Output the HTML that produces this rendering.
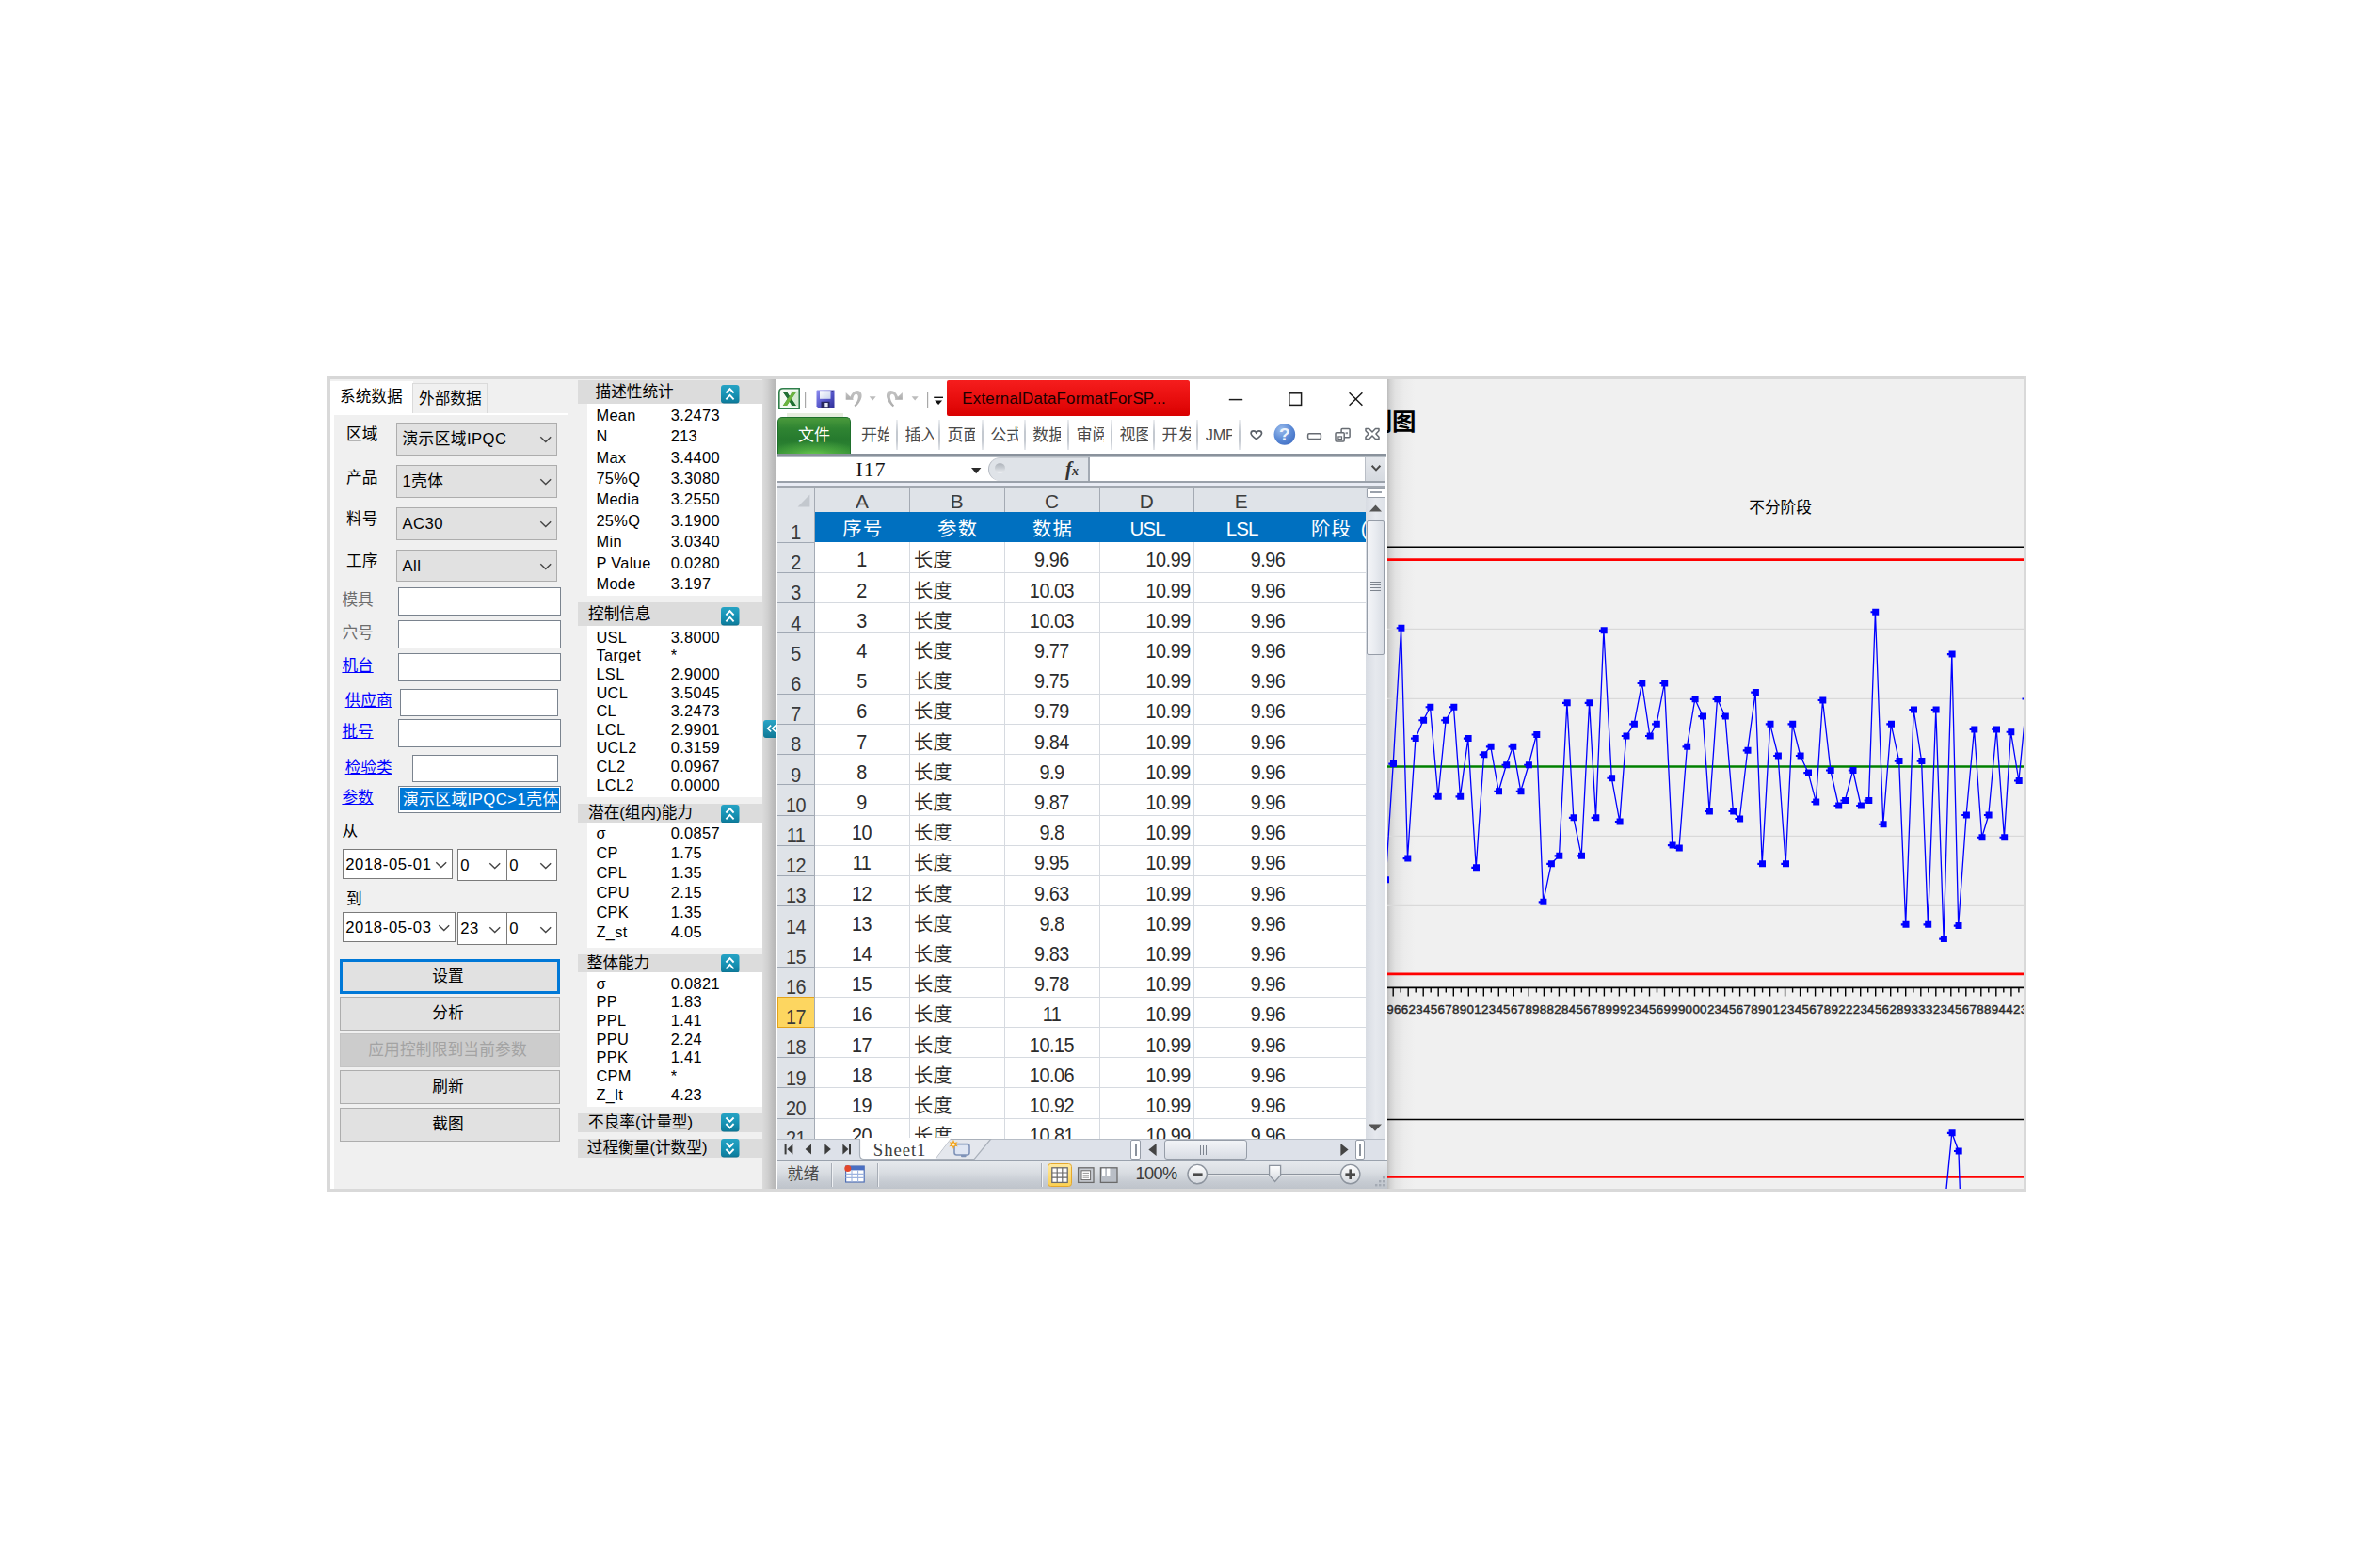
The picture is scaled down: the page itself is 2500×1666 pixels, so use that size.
<!DOCTYPE html><html lang="zh"><head><meta charset="utf-8"><title>SPC</title><style>
html,body{margin:0;padding:0;background:#fff;}
body{width:2500px;height:1666px;position:relative;overflow:hidden;font-family:"Liberation Sans","Noto Sans CJK SC",sans-serif;}
div{position:absolute;box-sizing:border-box;}
svg{position:absolute;overflow:visible;}
.cb{background:#e1e1e1;border:1px solid #adadad;}
.inp{background:#fff;border:1.5px solid #7a838e;}
.wcb{background:#fff;border:1.5px solid #7a7a7a;}
.btn{background:#e1e1e1;border:1.5px solid #adadad;text-align:center;font-size:16.67px;}
.hd{background:#dcdcdc;}
.wb{background:#fff;}
.st{font-size:16.4px;letter-spacing:0.35px;white-space:nowrap;color:#000;}
.lnk{color:#0000ff;text-decoration:underline;}
.xl{font-family:"Liberation Sans","Noto Sans CJK SC",sans-serif;color:#2b2b2b;}
.mono{font-family:"Liberation Mono","Noto Serif CJK SC",monospace;}
.ser{font-family:"Liberation Serif","Noto Serif CJK SC",serif;}
</style></head><body>
<div style="left:347px;top:400px;width:1806px;height:866px;background:#f0f0f0;"></div>
<div style="left:347px;top:400px;width:1806px;height:3px;background:#d7d7d7;"></div>
<div style="left:347px;top:400px;width:4px;height:866px;background:#d9d9d9;"></div>
<div style="left:347px;top:1263px;width:1806px;height:3px;background:#d9d9d9;"></div>
<div style="left:2150px;top:400px;width:3px;height:866px;background:#d9d9d9;"></div>
<div style="left:351px;top:405px;width:88px;height:36px;background:#fff;"></div>
<div style="left:438px;top:407px;width:80px;height:32px;background:#f0f0f0;border:1px solid #dadada;border-bottom:none;"></div>
<div style="left:351px;top:439px;width:253px;height:824px;background:#f0f0f0;border-right:1px solid #dcdcdc;"></div>
<div style="left:351px;top:439px;width:252px;height:2px;background:#fff;"></div>
<div style="left:351px;top:439px;width:4px;height:824px;background:#fff;"></div>
<div style="left:361px;top:408.70px;height:25px;line-height:25px;font-size:16.67px;color:#000;white-space:nowrap;">系统数据</div>
<div style="left:445px;top:411.10px;height:25px;line-height:25px;font-size:16.67px;color:#000;white-space:nowrap;">外部数据</div>
<div class="cb" style="left:421px;top:449px;width:171px;height:35px;"></div>
<div style="left:427.5px;top:454.40px;height:25px;line-height:25px;font-size:16.67px;color:#000;white-space:nowrap;letter-spacing:0.45px;">演示区域IPQC</div>
<svg style="left:573.6px;top:464.3px" width="11.5" height="6" viewBox="0 0 11.5 6"><path d="M0.3 0.3 L5.75 5.5 L11.2 0.3" fill="none" stroke="#444" stroke-width="1.4"/></svg>
<div style="left:368px;top:449.40px;height:25px;line-height:25px;font-size:16.67px;color:#000;white-space:nowrap;">区域</div>
<div class="cb" style="left:421px;top:494px;width:171px;height:35px;"></div>
<div style="left:427.5px;top:499.40px;height:25px;line-height:25px;font-size:16.67px;color:#000;white-space:nowrap;letter-spacing:0.45px;">1壳体</div>
<svg style="left:573.6px;top:509.3px" width="11.5" height="6" viewBox="0 0 11.5 6"><path d="M0.3 0.3 L5.75 5.5 L11.2 0.3" fill="none" stroke="#444" stroke-width="1.4"/></svg>
<div style="left:368px;top:494.70px;height:25px;line-height:25px;font-size:16.67px;color:#000;white-space:nowrap;">产品</div>
<div class="cb" style="left:421px;top:539px;width:171px;height:35px;"></div>
<div style="left:427.5px;top:544.40px;height:25px;line-height:25px;font-size:16.67px;color:#000;white-space:nowrap;letter-spacing:0.45px;">AC30</div>
<svg style="left:573.6px;top:554.3px" width="11.5" height="6" viewBox="0 0 11.5 6"><path d="M0.3 0.3 L5.75 5.5 L11.2 0.3" fill="none" stroke="#444" stroke-width="1.4"/></svg>
<div style="left:368px;top:539.40px;height:25px;line-height:25px;font-size:16.67px;color:#000;white-space:nowrap;">料号</div>
<div class="cb" style="left:421px;top:584px;width:171px;height:34px;"></div>
<div style="left:427.5px;top:588.90px;height:25px;line-height:25px;font-size:16.67px;color:#000;white-space:nowrap;letter-spacing:0.45px;">All</div>
<svg style="left:573.6px;top:598.8px" width="11.5" height="6" viewBox="0 0 11.5 6"><path d="M0.3 0.3 L5.75 5.5 L11.2 0.3" fill="none" stroke="#444" stroke-width="1.4"/></svg>
<div style="left:368px;top:584.10px;height:25px;line-height:25px;font-size:16.67px;color:#000;white-space:nowrap;">工序</div>
<div class="inp" style="left:423px;top:624px;width:173px;height:30px;"></div>
<div style="left:363.4px;top:624.70px;height:25px;line-height:25px;font-size:16.67px;color:#6d6d6d;white-space:nowrap;">模具</div>
<div class="inp" style="left:423px;top:659px;width:173px;height:30px;"></div>
<div style="left:363.4px;top:659.60px;height:25px;line-height:25px;font-size:16.67px;color:#6d6d6d;white-space:nowrap;">穴号</div>
<div class="inp" style="left:423px;top:694px;width:173px;height:30px;"></div>
<div style="left:363.4px;top:695.10px;height:25px;line-height:25px;font-size:16.67px;color:#0000ff;white-space:nowrap;text-decoration:underline;">机台</div>
<div class="inp" style="left:425px;top:732px;width:168px;height:29px;"></div>
<div style="left:366.7px;top:732.10px;height:25px;line-height:25px;font-size:16.67px;color:#0000ff;white-space:nowrap;text-decoration:underline;">供应商</div>
<div class="inp" style="left:423px;top:764px;width:173px;height:30px;"></div>
<div style="left:363.4px;top:765.40px;height:25px;line-height:25px;font-size:16.67px;color:#0000ff;white-space:nowrap;text-decoration:underline;">批号</div>
<div class="inp" style="left:438px;top:802px;width:155px;height:29px;"></div>
<div style="left:366.7px;top:803.00px;height:25px;line-height:25px;font-size:16.67px;color:#0000ff;white-space:nowrap;text-decoration:underline;">检验类</div>
<div class="inp" style="left:423px;top:835px;width:173px;height:29px;"></div>
<div style="left:363.4px;top:835.40px;height:25px;line-height:25px;font-size:16.67px;color:#0000ff;white-space:nowrap;text-decoration:underline;">参数</div>
<div style="left:425px;top:837px;width:169px;height:24px;background:#0078d7;overflow:hidden;"></div>
<div style="left:425px;top:837px;width:169px;height:24px;overflow:hidden;"><div style="left:3px;top:0;height:24px;line-height:25px;font-size:16.67px;color:#fff;white-space:nowrap;letter-spacing:0.5px;">演示区域IPQC&gt;1壳体</div></div>
<div style="left:363.5px;top:870.50px;height:25px;line-height:25px;font-size:16.67px;color:#000;white-space:nowrap;">从</div>
<div style="left:368px;top:942.70px;height:25px;line-height:25px;font-size:16.67px;color:#000;white-space:nowrap;">到</div>
<div class="wcb" style="left:364px;top:902px;width:117px;height:32px;"></div>
<div style="left:367.2px;top:905.70px;height:25px;line-height:25px;font-size:16.67px;color:#000;white-space:nowrap;letter-spacing:0.62px;">2018-05-01</div>
<svg style="left:463px;top:916.0px" width="11.5" height="6" viewBox="0 0 11.5 6"><path d="M0.3 0.3 L5.75 5.5 L11.2 0.3" fill="none" stroke="#444" stroke-width="1.4"/></svg>
<div class="wcb" style="left:486px;top:902px;width:53px;height:34px;"></div>
<div style="left:489.2px;top:906.70px;height:25px;line-height:25px;font-size:16.67px;color:#000;white-space:nowrap;letter-spacing:0.62px;">0</div>
<svg style="left:520px;top:917.0px" width="11.5" height="6" viewBox="0 0 11.5 6"><path d="M0.3 0.3 L5.75 5.5 L11.2 0.3" fill="none" stroke="#444" stroke-width="1.4"/></svg>
<div class="wcb" style="left:538px;top:902px;width:54px;height:34px;"></div>
<div style="left:541.2px;top:906.70px;height:25px;line-height:25px;font-size:16.67px;color:#000;white-space:nowrap;letter-spacing:0.62px;">0</div>
<svg style="left:573.6px;top:917.0px" width="11.5" height="6" viewBox="0 0 11.5 6"><path d="M0.3 0.3 L5.75 5.5 L11.2 0.3" fill="none" stroke="#444" stroke-width="1.4"/></svg>
<div class="wcb" style="left:364px;top:969px;width:120px;height:32px;"></div>
<div style="left:367.2px;top:972.70px;height:25px;line-height:25px;font-size:16.67px;color:#000;white-space:nowrap;letter-spacing:0.62px;">2018-05-03</div>
<svg style="left:466px;top:983.0px" width="11.5" height="6" viewBox="0 0 11.5 6"><path d="M0.3 0.3 L5.75 5.5 L11.2 0.3" fill="none" stroke="#444" stroke-width="1.4"/></svg>
<div class="wcb" style="left:486px;top:969px;width:53px;height:35px;"></div>
<div style="left:489.2px;top:974.20px;height:25px;line-height:25px;font-size:16.67px;color:#000;white-space:nowrap;letter-spacing:0.62px;">23</div>
<svg style="left:520px;top:984.5px" width="11.5" height="6" viewBox="0 0 11.5 6"><path d="M0.3 0.3 L5.75 5.5 L11.2 0.3" fill="none" stroke="#444" stroke-width="1.4"/></svg>
<div class="wcb" style="left:538px;top:969px;width:54px;height:35px;"></div>
<div style="left:541.2px;top:974.20px;height:25px;line-height:25px;font-size:16.67px;color:#000;white-space:nowrap;letter-spacing:0.62px;">0</div>
<svg style="left:573.6px;top:984.5px" width="11.5" height="6" viewBox="0 0 11.5 6"><path d="M0.3 0.3 L5.75 5.5 L11.2 0.3" fill="none" stroke="#444" stroke-width="1.4"/></svg>
<div class="btn" style="left:361px;top:1019px;width:234px;height:37px;border:3px solid #0078d7;line-height:31px;padding-right:4px;">设置</div>
<div class="btn" style="left:361px;top:1059px;width:234px;height:36px;line-height:33px;padding-right:4px;">分析</div>
<div class="btn" style="left:361px;top:1098px;width:234px;height:36px;line-height:33px;background:#cccccc;border-color:#c4c4c4;color:#a3a3a3;padding-right:5px;letter-spacing:0.2px;">应用控制限到当前参数</div>
<div class="btn" style="left:361px;top:1137px;width:234px;height:36px;line-height:33px;padding-right:4px;">刷新</div>
<div class="btn" style="left:361px;top:1177px;width:234px;height:36px;line-height:33px;padding-right:4px;">截图</div>
<div class="hd" style="left:614px;top:404px;width:196px;height:25px;overflow:hidden;"></div>
<div style="left:632.5px;top:403.80px;height:25px;line-height:25px;font-size:16.67px;color:#000;white-space:nowrap;">描述性统计</div>
<svg style="left:765.8px;top:408.5px" width="19.5" height="19" viewBox="0 0 19.5 19"><defs><linearGradient id="tg765.8408.5" x1="0" y1="0" x2="0" y2="1"><stop offset="0" stop-color="#27a3c4"/><stop offset="0.5" stop-color="#1793b5"/><stop offset="0.9" stop-color="#0f7f9f"/><stop offset="1" stop-color="#0b6f8d"/></linearGradient></defs><rect x="0" y="0" width="19.5" height="19.5" rx="3" fill="url(#tg765.8408.5)"/><path d="M5.4 8.5 L9.5 4.1 L13.6 8.5 M5.4 15.3 L9.5 10.9 L13.6 15.3" fill="none" stroke="#fff" stroke-width="1.9" stroke-linejoin="miter"/></svg>
<div class="wb" style="left:624px;top:429px;width:186px;height:204px;overflow:hidden;"></div>
<div class="st" style="left:633.4px;top:430.70px;height:22.00px;line-height:20px;overflow:hidden;">Mean</div>
<div class="st" style="left:712.7px;top:430.70px;height:22.00px;line-height:20px;overflow:hidden;">3.2473</div>
<div class="st" style="left:633.4px;top:453.10px;height:22.00px;line-height:20px;overflow:hidden;">N</div>
<div class="st" style="left:712.7px;top:453.10px;height:22.00px;line-height:20px;overflow:hidden;">213</div>
<div class="st" style="left:633.4px;top:475.50px;height:22.00px;line-height:20px;overflow:hidden;">Max</div>
<div class="st" style="left:712.7px;top:475.50px;height:22.00px;line-height:20px;overflow:hidden;">3.4400</div>
<div class="st" style="left:633.4px;top:497.90px;height:22.00px;line-height:20px;overflow:hidden;">75%Q</div>
<div class="st" style="left:712.7px;top:497.90px;height:22.00px;line-height:20px;overflow:hidden;">3.3080</div>
<div class="st" style="left:633.4px;top:520.30px;height:22.00px;line-height:20px;overflow:hidden;">Media</div>
<div class="st" style="left:712.7px;top:520.30px;height:22.00px;line-height:20px;overflow:hidden;">3.2550</div>
<div class="st" style="left:633.4px;top:542.70px;height:22.00px;line-height:20px;overflow:hidden;">25%Q</div>
<div class="st" style="left:712.7px;top:542.70px;height:22.00px;line-height:20px;overflow:hidden;">3.1900</div>
<div class="st" style="left:633.4px;top:565.10px;height:22.00px;line-height:20px;overflow:hidden;">Min</div>
<div class="st" style="left:712.7px;top:565.10px;height:22.00px;line-height:20px;overflow:hidden;">3.0340</div>
<div class="st" style="left:633.4px;top:587.50px;height:22.00px;line-height:20px;overflow:hidden;">P Value</div>
<div class="st" style="left:712.7px;top:587.50px;height:22.00px;line-height:20px;overflow:hidden;">0.0280</div>
<div class="st" style="left:633.4px;top:609.90px;height:22.00px;line-height:20px;overflow:hidden;">Mode</div>
<div class="st" style="left:712.7px;top:609.90px;height:22.00px;line-height:20px;overflow:hidden;">3.197</div>
<div class="hd" style="left:614px;top:640px;width:196px;height:25px;overflow:hidden;"></div>
<div style="left:625px;top:639.80px;height:25px;line-height:25px;font-size:16.67px;color:#000;white-space:nowrap;">控制信息</div>
<svg style="left:765.8px;top:644.5px" width="19.5" height="19" viewBox="0 0 19.5 19"><defs><linearGradient id="tg765.8644.5" x1="0" y1="0" x2="0" y2="1"><stop offset="0" stop-color="#27a3c4"/><stop offset="0.5" stop-color="#1793b5"/><stop offset="0.9" stop-color="#0f7f9f"/><stop offset="1" stop-color="#0b6f8d"/></linearGradient></defs><rect x="0" y="0" width="19.5" height="19.5" rx="3" fill="url(#tg765.8644.5)"/><path d="M5.4 8.5 L9.5 4.1 L13.6 8.5 M5.4 15.3 L9.5 10.9 L13.6 15.3" fill="none" stroke="#fff" stroke-width="1.9" stroke-linejoin="miter"/></svg>
<div class="wb" style="left:624px;top:665px;width:186px;height:182px;overflow:hidden;"></div>
<div class="st" style="left:633.4px;top:666.70px;height:18.03px;line-height:20px;overflow:hidden;">USL</div>
<div class="st" style="left:712.7px;top:666.70px;height:18.03px;line-height:20px;overflow:hidden;">3.8000</div>
<div class="st" style="left:633.4px;top:686.33px;height:18.03px;line-height:20px;overflow:hidden;">Target</div>
<div class="st" style="left:712.7px;top:686.33px;height:18.03px;line-height:20px;overflow:hidden;">*</div>
<div class="st" style="left:633.4px;top:705.96px;height:18.03px;line-height:20px;overflow:hidden;">LSL</div>
<div class="st" style="left:712.7px;top:705.96px;height:18.03px;line-height:20px;overflow:hidden;">2.9000</div>
<div class="st" style="left:633.4px;top:725.59px;height:18.03px;line-height:20px;overflow:hidden;">UCL</div>
<div class="st" style="left:712.7px;top:725.59px;height:18.03px;line-height:20px;overflow:hidden;">3.5045</div>
<div class="st" style="left:633.4px;top:745.22px;height:18.03px;line-height:20px;overflow:hidden;">CL</div>
<div class="st" style="left:712.7px;top:745.22px;height:18.03px;line-height:20px;overflow:hidden;">3.2473</div>
<div class="st" style="left:633.4px;top:764.85px;height:18.03px;line-height:20px;overflow:hidden;">LCL</div>
<div class="st" style="left:712.7px;top:764.85px;height:18.03px;line-height:20px;overflow:hidden;">2.9901</div>
<div class="st" style="left:633.4px;top:784.48px;height:18.03px;line-height:20px;overflow:hidden;">UCL2</div>
<div class="st" style="left:712.7px;top:784.48px;height:18.03px;line-height:20px;overflow:hidden;">0.3159</div>
<div class="st" style="left:633.4px;top:804.11px;height:18.03px;line-height:20px;overflow:hidden;">CL2</div>
<div class="st" style="left:712.7px;top:804.11px;height:18.03px;line-height:20px;overflow:hidden;">0.0967</div>
<div class="st" style="left:633.4px;top:823.74px;height:22.00px;line-height:20px;overflow:hidden;">LCL2</div>
<div class="st" style="left:712.7px;top:823.74px;height:22.00px;line-height:20px;overflow:hidden;">0.0000</div>
<div class="hd" style="left:614px;top:854px;width:196px;height:20px;overflow:hidden;"></div>
<div style="left:625px;top:851.30px;height:25px;line-height:25px;font-size:16.67px;color:#000;white-space:nowrap;">潜在(组内)能力</div>
<svg style="left:765.8px;top:855.4px" width="19.5" height="18.5" viewBox="0 0 19.5 18.5"><defs><linearGradient id="tg765.8855.4" x1="0" y1="0" x2="0" y2="1"><stop offset="0" stop-color="#27a3c4"/><stop offset="0.5" stop-color="#1793b5"/><stop offset="0.9" stop-color="#0f7f9f"/><stop offset="1" stop-color="#0b6f8d"/></linearGradient></defs><rect x="0" y="0" width="19.5" height="19.5" rx="3" fill="url(#tg765.8855.4)"/><path d="M5.4 8.5 L9.5 4.1 L13.6 8.5 M5.4 15.3 L9.5 10.9 L13.6 15.3" fill="none" stroke="#fff" stroke-width="1.9" stroke-linejoin="miter"/></svg>
<div class="wb" style="left:624px;top:874px;width:186px;height:133px;overflow:hidden;"></div>
<div class="st" style="left:633.4px;top:875.00px;height:21.05px;line-height:20px;overflow:hidden;">σ</div>
<div class="st" style="left:712.7px;top:875.00px;height:21.05px;line-height:20px;overflow:hidden;">0.0857</div>
<div class="st" style="left:633.4px;top:896.05px;height:21.05px;line-height:20px;overflow:hidden;">CP</div>
<div class="st" style="left:712.7px;top:896.05px;height:21.05px;line-height:20px;overflow:hidden;">1.75</div>
<div class="st" style="left:633.4px;top:917.10px;height:21.05px;line-height:20px;overflow:hidden;">CPL</div>
<div class="st" style="left:712.7px;top:917.10px;height:21.05px;line-height:20px;overflow:hidden;">1.35</div>
<div class="st" style="left:633.4px;top:938.15px;height:21.05px;line-height:20px;overflow:hidden;">CPU</div>
<div class="st" style="left:712.7px;top:938.15px;height:21.05px;line-height:20px;overflow:hidden;">2.15</div>
<div class="st" style="left:633.4px;top:959.20px;height:21.05px;line-height:20px;overflow:hidden;">CPK</div>
<div class="st" style="left:712.7px;top:959.20px;height:21.05px;line-height:20px;overflow:hidden;">1.35</div>
<div class="st" style="left:633.4px;top:980.25px;height:22.00px;line-height:20px;overflow:hidden;">Z_st</div>
<div class="st" style="left:712.7px;top:980.25px;height:22.00px;line-height:20px;overflow:hidden;">4.05</div>
<div class="hd" style="left:614px;top:1014px;width:196px;height:19px;overflow:hidden;"></div>
<div style="left:623.8px;top:1010.80px;height:25px;line-height:25px;font-size:16.67px;color:#000;white-space:nowrap;">整体能力</div>
<svg style="left:765.8px;top:1014.2px" width="19.5" height="19" viewBox="0 0 19.5 19"><defs><linearGradient id="tg765.81014.2" x1="0" y1="0" x2="0" y2="1"><stop offset="0" stop-color="#27a3c4"/><stop offset="0.5" stop-color="#1793b5"/><stop offset="0.9" stop-color="#0f7f9f"/><stop offset="1" stop-color="#0b6f8d"/></linearGradient></defs><rect x="0" y="0" width="19.5" height="19.5" rx="3" fill="url(#tg765.81014.2)"/><path d="M5.4 8.5 L9.5 4.1 L13.6 8.5 M5.4 15.3 L9.5 10.9 L13.6 15.3" fill="none" stroke="#fff" stroke-width="1.9" stroke-linejoin="miter"/></svg>
<div class="wb" style="left:624px;top:1033px;width:186px;height:143px;overflow:hidden;"></div>
<div class="st" style="left:633.4px;top:1034.80px;height:18.05px;line-height:20px;overflow:hidden;">σ</div>
<div class="st" style="left:712.7px;top:1034.80px;height:18.05px;line-height:20px;overflow:hidden;">0.0821</div>
<div class="st" style="left:633.4px;top:1054.45px;height:18.05px;line-height:20px;overflow:hidden;">PP</div>
<div class="st" style="left:712.7px;top:1054.45px;height:18.05px;line-height:20px;overflow:hidden;">1.83</div>
<div class="st" style="left:633.4px;top:1074.10px;height:18.05px;line-height:20px;overflow:hidden;">PPL</div>
<div class="st" style="left:712.7px;top:1074.10px;height:18.05px;line-height:20px;overflow:hidden;">1.41</div>
<div class="st" style="left:633.4px;top:1093.75px;height:18.05px;line-height:20px;overflow:hidden;">PPU</div>
<div class="st" style="left:712.7px;top:1093.75px;height:18.05px;line-height:20px;overflow:hidden;">2.24</div>
<div class="st" style="left:633.4px;top:1113.40px;height:18.05px;line-height:20px;overflow:hidden;">PPK</div>
<div class="st" style="left:712.7px;top:1113.40px;height:18.05px;line-height:20px;overflow:hidden;">1.41</div>
<div class="st" style="left:633.4px;top:1133.05px;height:18.05px;line-height:20px;overflow:hidden;">CPM</div>
<div class="st" style="left:712.7px;top:1133.05px;height:18.05px;line-height:20px;overflow:hidden;">*</div>
<div class="st" style="left:633.4px;top:1152.70px;height:22.00px;line-height:20px;overflow:hidden;">Z_lt</div>
<div class="st" style="left:712.7px;top:1152.70px;height:22.00px;line-height:20px;overflow:hidden;">4.23</div>
<div class="hd" style="left:614px;top:1183px;width:196px;height:20px;overflow:hidden;"></div>
<div style="left:625px;top:1180.30px;height:25px;line-height:25px;font-size:16.67px;color:#000;white-space:nowrap;">不良率(计量型)</div>
<svg style="left:765.8px;top:1183.1px" width="19.5" height="19.6" viewBox="0 0 19.5 19.6"><defs><linearGradient id="tg765.81183.1" x1="0" y1="0" x2="0" y2="1"><stop offset="0" stop-color="#27a3c4"/><stop offset="0.5" stop-color="#1793b5"/><stop offset="0.9" stop-color="#0f7f9f"/><stop offset="1" stop-color="#0b6f8d"/></linearGradient></defs><rect x="0" y="0" width="19.5" height="19.5" rx="3" fill="url(#tg765.81183.1)"/><path d="M5.4 4.5 L9.5 8.7 L13.6 4.5 M5.4 11 L9.5 15.3 L13.6 11" fill="none" stroke="#fff" stroke-width="1.9" stroke-linejoin="miter"/></svg>
<div class="hd" style="left:614px;top:1210px;width:196px;height:20px;overflow:hidden;"></div>
<div style="left:623.8px;top:1207.30px;height:25px;line-height:25px;font-size:16.67px;color:#000;white-space:nowrap;">过程衡量(计数型)</div>
<svg style="left:765.8px;top:1209.9px" width="19.5" height="19.6" viewBox="0 0 19.5 19.6"><defs><linearGradient id="tg765.81209.9" x1="0" y1="0" x2="0" y2="1"><stop offset="0" stop-color="#27a3c4"/><stop offset="0.5" stop-color="#1793b5"/><stop offset="0.9" stop-color="#0f7f9f"/><stop offset="1" stop-color="#0b6f8d"/></linearGradient></defs><rect x="0" y="0" width="19.5" height="19.5" rx="3" fill="url(#tg765.81209.9)"/><path d="M5.4 4.5 L9.5 8.7 L13.6 4.5 M5.4 11 L9.5 15.3 L13.6 11" fill="none" stroke="#fff" stroke-width="1.9" stroke-linejoin="miter"/></svg>
<div style="left:810px;top:403px;width:14px;height:860px;background:linear-gradient(90deg,#dbdbdb 0%,#d0d0d0 40%,#c0c0c0 75%,#b6b6b6 100%);"></div>
<svg style="left:810.5px;top:765px" width="14" height="19" viewBox="0 0 14 19"><defs><linearGradient id="tgs" x1="0" y1="0" x2="0" y2="1"><stop offset="0" stop-color="#2aa5c6"/><stop offset="1" stop-color="#0f7896"/></linearGradient></defs><path d="M3 0 H14 V19 H3 Q0 19 0 16 V3 Q0 0 3 0Z" fill="url(#tgs)"/><path d="M8.2 5.6 L4.6 9 L8.2 12.4 M13.2 5.6 L9.6 9 L13.2 12.4" fill="none" stroke="#fff" stroke-width="1.6"/></svg>
<div style="left:824px;top:403px;width:650px;height:860px;background:#fff;"></div>
<svg style="left:827px;top:412px" width="23" height="23" viewBox="0 0 23 23">
<path d="M5 0.8 H22.2 V22.2 H0.8 V5 Q0.8 0.8 5 0.8Z" fill="#f4faf3" stroke="#2f7f4a" stroke-width="1.6"/>
<path d="M13 3.5 L21 3.5 L21 19.5 L13 19.5Z" fill="#d5ead2"/>
<path d="M5.2 5 L9.4 5 L12 9.2 L14.6 5 L18.6 5 L14 11.7 L18.8 19 L14.6 19 L11.8 14.4 L9 19 L4.8 19 L9.8 11.6Z" fill="#2e8b3c"/>
<path d="M9.4 5 L14.2 12.2 L18.8 19 L14.6 19 L5.2 5Z" fill="#1f6e33"/>
<path d="M14.6 5 L18.6 5 L9 19 L4.8 19Z" fill="#6cb33e"/>
</svg>
<div style="left:855px;top:416px;width:2px;height:18px;background:linear-gradient(90deg,#a8a8a8 50%,#eee 50%);"></div>
<svg style="left:866.5px;top:414px" width="20" height="20" viewBox="0 0 20 20">
<defs><linearGradient id="sv" x1="0" y1="0" x2="1" y2="1"><stop offset="0" stop-color="#8e8ef0"/><stop offset="0.55" stop-color="#5454c8"/><stop offset="1" stop-color="#2e2e96"/></linearGradient>
<linearGradient id="sv2" x1="0" y1="0" x2="1" y2="1"><stop offset="0" stop-color="#ffffff"/><stop offset="1" stop-color="#c9d3ee"/></linearGradient></defs>
<path d="M1.5 0.5 H19.5 V19.5 H2.5 L0.5 17.5 V1.5 Q0.5 0.5 1.5 0.5Z" fill="url(#sv)"/>
<rect x="4" y="1.2" width="11.5" height="8.6" fill="url(#sv2)"/>
<rect x="5.5" y="12.8" width="9" height="6.7" fill="#26265e"/>
<rect x="9.3" y="14" width="3.3" height="4.2" fill="#e6e9f6"/>
<rect x="16.6" y="1.4" width="1.6" height="1.6" fill="#26265e"/>
</svg>
<svg style="left:898px;top:414px" width="80" height="19" viewBox="0 0 80 19">
<defs><linearGradient id="ug" x1="0" y1="0" x2="0" y2="1"><stop offset="0" stop-color="#c4c4c4"/><stop offset="1" stop-color="#ababab"/></linearGradient></defs>
<g fill="url(#ug)">
<path d="M0.7 2.9 L0.7 10.8 L8.9 10.8Z"/>
<path d="M5 9.6 C6.2 3.8 9.8 0.7 13.2 0.9 C16.8 1.2 18.2 4.6 17.4 8.2 C16.6 12 13.8 15.6 10.9 18.3 L9.5 16.8 C11.9 14.2 13.5 11.2 13.8 8.2 C14 5.8 12.9 4.5 11.4 4.7 C9.8 4.9 8.7 6.9 8.2 10.2Z"/>
<path d="M60.9 2.9 L60.9 10.8 L52.7 10.8Z"/>
<path d="M56.6 9.6 C55.4 3.8 51.8 0.7 48.4 0.9 C44.8 1.2 43.4 4.6 44.2 8.2 C45 12 47.8 15.6 50.7 18.3 L52.1 16.8 C49.7 14.2 48.1 11.2 47.8 8.2 C47.6 5.8 48.7 4.5 50.2 4.7 C51.8 4.9 52.9 6.9 53.4 10.2Z"/>
</g>
<path d="M25.7 7.3 L32.7 7.3 L29.2 11.4Z" fill="#bcbcbc"/>
<path d="M70.6 7.3 L77.7 7.3 L74.15 11.4Z" fill="#bcbcbc"/>
</svg>
<div style="left:985px;top:416px;width:2px;height:18px;background:linear-gradient(90deg,#a8a8a8 50%,#eee 50%);"></div>
<svg style="left:992px;top:420.5px" width="11" height="10" viewBox="0 0 11 10"><rect x="0.2" y="0.6" width="9.8" height="1.4" fill="#111"/><path d="M1.1 4.6 L9.1 4.6 L5.1 9.1Z" fill="#111"/></svg>
<div style="left:1006px;top:404px;width:258px;height:38px;background:linear-gradient(180deg,#f51d1d 0%,#ea1010 45%,#d90000 100%);border-radius:2px;overflow:hidden;"></div>
<div style="left:1022.3px;top:411.10px;height:25px;line-height:25px;font-size:16.9px;color:#1c0000;white-space:nowrap;letter-spacing:0.22px;">ExternalDataFormatForSP...</div>
<svg style="left:1300px;top:412px" width="160" height="24" viewBox="0 0 160 24">
<path d="M5.8 12.6 H20.2" stroke="#1b1b1b" stroke-width="1.5"/>
<rect x="69.8" y="5.8" width="12.8" height="12.6" fill="none" stroke="#1b1b1b" stroke-width="1.5"/>
<path d="M133.6 5.2 L147.4 18.8 M147.4 5.2 L133.6 18.8" stroke="#1b1b1b" stroke-width="1.5"/>
</svg>
<div style="left:836px;top:439px;width:60px;height:4px;background:#e7eedf;"></div>
<div style="left:826px;top:443px;width:78px;height:39px;border-radius:5px 5px 0 0;border:1.5px solid #1f6f2c;border-bottom:none;background:radial-gradient(ellipse 70% 45% at 50% 108%,#6fd052 0%,rgba(96,190,72,0.6) 45%,rgba(60,150,60,0) 100%),linear-gradient(180deg,#4a9a3c 0%,#2f8432 30%,#267a2e 60%,#2f8a34 100%);"></div>
<div style="left:848px;top:449.60px;height:26px;line-height:26px;font-size:17px;color:#fff;white-space:nowrap;">文件</div>
<div style="left:915px;top:449px;width:30px;height:28px;overflow:hidden;"><div style="left:0;top:0;height:28px;line-height:27px;font-size:17px;color:#4a4a4a;white-space:nowrap;">开始</div></div>
<div style="left:961.5px;top:449px;width:30px;height:28px;overflow:hidden;"><div style="left:0;top:0;height:28px;line-height:27px;font-size:17px;color:#4a4a4a;white-space:nowrap;">插入</div></div>
<div style="left:1006.4px;top:449px;width:30px;height:28px;overflow:hidden;"><div style="left:0;top:0;height:28px;line-height:27px;font-size:17px;color:#4a4a4a;white-space:nowrap;">页面</div></div>
<div style="left:1052.3px;top:449px;width:30px;height:28px;overflow:hidden;"><div style="left:0;top:0;height:28px;line-height:27px;font-size:17px;color:#4a4a4a;white-space:nowrap;">公式</div></div>
<div style="left:1097.2px;top:449px;width:30px;height:28px;overflow:hidden;"><div style="left:0;top:0;height:28px;line-height:27px;font-size:17px;color:#4a4a4a;white-space:nowrap;">数据</div></div>
<div style="left:1143.4px;top:449px;width:30px;height:28px;overflow:hidden;"><div style="left:0;top:0;height:28px;line-height:27px;font-size:17px;color:#4a4a4a;white-space:nowrap;">审阅</div></div>
<div style="left:1189.5px;top:449px;width:30px;height:28px;overflow:hidden;"><div style="left:0;top:0;height:28px;line-height:27px;font-size:17px;color:#4a4a4a;white-space:nowrap;">视图</div></div>
<div style="left:1234.6px;top:449px;width:30px;height:28px;overflow:hidden;"><div style="left:0;top:0;height:28px;line-height:27px;font-size:17px;color:#4a4a4a;white-space:nowrap;">开发</div></div>
<div style="left:1280.8px;top:449px;width:28px;height:28px;overflow:hidden;"><div style="left:0;top:0;height:28px;line-height:27px;font-size:16.2px;letter-spacing:-0.2px;color:#4a4a4a;white-space:nowrap;">JMP</div></div>
<div style="left:952px;top:446px;width:1px;height:32px;background:linear-gradient(180deg,#eceef1,#c4c9d0 40%,#c4c9d0 70%,#e6e8ec);width:1.5px;"></div>
<div style="left:997px;top:446px;width:1px;height:32px;background:linear-gradient(180deg,#eceef1,#c4c9d0 40%,#c4c9d0 70%,#e6e8ec);width:1.5px;"></div>
<div style="left:1043px;top:446px;width:1px;height:32px;background:linear-gradient(180deg,#eceef1,#c4c9d0 40%,#c4c9d0 70%,#e6e8ec);width:1.5px;"></div>
<div style="left:1088px;top:446px;width:1px;height:32px;background:linear-gradient(180deg,#eceef1,#c4c9d0 40%,#c4c9d0 70%,#e6e8ec);width:1.5px;"></div>
<div style="left:1134px;top:446px;width:1px;height:32px;background:linear-gradient(180deg,#eceef1,#c4c9d0 40%,#c4c9d0 70%,#e6e8ec);width:1.5px;"></div>
<div style="left:1180px;top:446px;width:1px;height:32px;background:linear-gradient(180deg,#eceef1,#c4c9d0 40%,#c4c9d0 70%,#e6e8ec);width:1.5px;"></div>
<div style="left:1225px;top:446px;width:1px;height:32px;background:linear-gradient(180deg,#eceef1,#c4c9d0 40%,#c4c9d0 70%,#e6e8ec);width:1.5px;"></div>
<div style="left:1271px;top:446px;width:1px;height:32px;background:linear-gradient(180deg,#eceef1,#c4c9d0 40%,#c4c9d0 70%,#e6e8ec);width:1.5px;"></div>
<div style="left:1316px;top:446px;width:1px;height:32px;background:linear-gradient(180deg,#eceef1,#c4c9d0 40%,#c4c9d0 70%,#e6e8ec);width:1.5px;"></div>
<svg style="left:1328px;top:448px" width="142" height="28" viewBox="0 0 142 28">
<defs><radialGradient id="hp" cx="0.35" cy="0.28" r="0.85"><stop offset="0" stop-color="#9bbcec"/><stop offset="0.55" stop-color="#5b8ad6"/><stop offset="1" stop-color="#3f6cc2"/></radialGradient></defs>
<path d="M1.1 12.4 Q1.1 9.8 3.8 9.8 Q6.3 9.8 6.8 12.4 Q7.3 9.8 9.8 9.8 Q12.5 9.8 12.5 12.4 Q12.5 14.4 6.8 18.6 Q1.1 14.4 1.1 12.4Z" fill="#fff" stroke="#5a6068" stroke-width="1.7" stroke-linejoin="round"/>
<circle cx="36.85" cy="13.5" r="11.3" fill="url(#hp)"/>
<text x="36.9" y="20.2" font-size="19" font-weight="bold" fill="#eef4fc" text-anchor="middle" font-family="Liberation Sans, sans-serif">?</text>
<rect x="61.6" y="12.8" width="13.8" height="5.6" rx="1.4" fill="#fff" stroke="#666b72" stroke-width="1.5"/>
<rect x="97.1" y="7.5" width="9" height="9.2" rx="1" fill="#fff" stroke="#666b72" stroke-width="1.5"/>
<rect x="91" y="11.7" width="9.2" height="9.2" rx="1" fill="#fff" stroke="#666b72" stroke-width="1.5"/>
<rect x="93.9" y="15.9" width="3.6" height="2.6" fill="none" stroke="#666b72" stroke-width="1.2"/>
<rect x="101.6" y="11.2" width="2.4" height="2" fill="#8a8f96"/>
<path d="M123 7.4 L126.6 7.4 L130 10.9 L133.4 7.4 L137 7.4 L137 9.8 L133.9 13 L137 16.2 L137 18.6 L133.4 18.6 L130 15.1 L126.6 18.6 L123 18.6 L123 16.2 L126.1 13 L123 9.8Z" fill="#fff" stroke="#666b72" stroke-width="1.5" stroke-linejoin="round"/>
</svg>
<div style="left:826px;top:482px;width:647px;height:4px;background:linear-gradient(180deg,#8a929c 0%,#8a929c 45%,#c2c8cf 100%);"></div>
<div style="left:826px;top:486px;width:646px;height:25px;background:#fff;"></div>
<div class="ser" style="left:909.6px;top:483.40px;height:32px;line-height:32px;font-size:21.5px;color:#111;white-space:nowrap;letter-spacing:1.1px;">I17</div>
<svg style="left:1031.5px;top:496.6px" width="10.4" height="6.2" viewBox="0 0 10.4 6.2"><path d="M0 0 L10.4 0 L5.2 6.2Z" fill="#2a2a2a"/></svg>
<div style="left:1050px;top:486px;width:107px;height:25px;background:#dfe3e8;border-radius:13px 0 0 13px;border-left:1px solid #b5bac2;border-top:1px solid #c9cdd3;"></div>
<div style="left:1057px;top:491.5px;width:11px;height:11.0px;border-radius:6px;background:linear-gradient(180deg,#aeb3ba 0%,#c7ccd2 45%,#eef0f3 100%);"></div>
<div style="left:1132px;top:486px;height:25px;line-height:24px;font-size:21px;font-style:italic;font-weight:bold;font-family:'Liberation Serif',serif;color:#333;white-space:nowrap;">f<span style="font-size:14px;">x</span></div>
<div style="left:1156px;top:486px;width:2px;height:25px;background:#a3aab3;width:1.5px;"></div>
<div style="left:1450px;top:486px;width:22px;height:25px;background:linear-gradient(180deg,#e4e7ec,#d5d9df);border-left:1px solid #b9bec6;"></div>
<svg style="left:1456.5px;top:494px" width="10" height="7" viewBox="0 0 10 7"><path d="M0.6 0.8 L5 5.4 L9.4 0.8" fill="none" stroke="#4a4a4a" stroke-width="2"/></svg>
<div style="left:826px;top:511px;width:646px;height:7px;background:linear-gradient(180deg,#9aa1aa 0,#9aa1aa 1.5px,#e9ecf4 1.5px,#e9ecf4 5px,#a2a8b0 5px,#a2a8b0 7px);"></div>
<div style="left:826px;top:518px;width:625px;height:26px;background:#dfe3e8;"></div>
<div style="left:826px;top:518px;width:40px;height:692px;background:#dfe3e8;"></div>
<svg style="left:846.5px;top:525px" width="14" height="14" viewBox="0 0 14 14"><path d="M13.4 0.6 L13.4 13.4 L0.6 13.4Z" fill="#c3c8ce"/></svg>
<div class="xl" style="left:865.4px;top:519px;width:101.0px;height:25px;line-height:27.5px;font-size:20.8px;text-align:center;color:#3d3d3d;">A</div>
<div class="xl" style="left:966.4px;top:519px;width:100.6px;height:25px;line-height:27.5px;font-size:20.8px;text-align:center;color:#3d3d3d;">B</div>
<div class="xl" style="left:1067px;top:519px;width:101.0px;height:25px;line-height:27.5px;font-size:20.8px;text-align:center;color:#3d3d3d;">C</div>
<div class="xl" style="left:1168px;top:519px;width:100.4px;height:25px;line-height:27.5px;font-size:20.8px;text-align:center;color:#3d3d3d;">D</div>
<div class="xl" style="left:1268.4px;top:519px;width:100.6px;height:25px;line-height:27.5px;font-size:20.8px;text-align:center;color:#3d3d3d;">E</div>
<div style="left:865px;top:519px;width:1px;height:25px;background:#a4aab3;"></div>
<div style="left:966px;top:519px;width:1px;height:25px;background:#a4aab3;"></div>
<div style="left:1067px;top:519px;width:1px;height:25px;background:#a4aab3;"></div>
<div style="left:1168px;top:519px;width:1px;height:25px;background:#a4aab3;"></div>
<div style="left:1268px;top:519px;width:1px;height:25px;background:#a4aab3;"></div>
<div style="left:1369px;top:519px;width:1px;height:25px;background:#a4aab3;"></div>
<div style="left:866px;top:544px;width:585px;height:32px;background:#0070c0;"></div>
<div class="xl" style="left:865.4px;top:544px;width:101.0px;height:32px;line-height:36.5px;font-size:20.4px;text-align:center;color:#fff;letter-spacing:1.2px;padding-left:2px;">序号</div>
<div class="xl" style="left:966.4px;top:544px;width:100.6px;height:32px;line-height:36.5px;font-size:20.4px;text-align:center;color:#fff;letter-spacing:1.2px;padding-left:2px;">参数</div>
<div class="xl" style="left:1067px;top:544px;width:101.0px;height:32px;line-height:36.5px;font-size:20.4px;text-align:center;color:#fff;letter-spacing:1.2px;padding-left:2px;">数据</div>
<div class="xl" style="left:1168px;top:544px;width:100.4px;height:32px;line-height:36.5px;font-size:20.5px;text-align:center;color:#fff;letter-spacing:-0.8px;padding-left:2px;">USL</div>
<div class="xl" style="left:1268.4px;top:544px;width:100.6px;height:32px;line-height:36.5px;font-size:20.5px;text-align:center;color:#fff;letter-spacing:-0.8px;padding-left:2px;">LSL</div>
<div class="xl" style="left:1393px;top:544px;width:58px;height:32px;line-height:36.5px;font-size:20.4px;color:#fff;letter-spacing:1.2px;overflow:hidden;white-space:nowrap;">阶段<span style="margin-left:9.5px">(</span></div>
<div style="left:826px;top:544px;width:625px;height:666px;overflow:hidden;">
<div class="xl" style="left:0px;top:6.0px;width:39px;height:30px;line-height:32px;font-size:22px;text-align:center;color:#3a3a3a;letter-spacing:-0.5px;transform:scaleX(0.9);">1</div>
<div style="left:0px;top:32px;width:40px;height:1px;background:#a0a8b3;"></div>
<div class="xl" style="left:0px;top:38.2px;width:39px;height:30px;line-height:32px;font-size:22px;text-align:center;color:#3a3a3a;letter-spacing:-0.5px;transform:scaleX(0.9);">2</div>
<div class="xl" style="left:39.39999999999998px;top:35.3px;width:101px;height:32px;line-height:32.6px;font-size:22px;text-align:center;letter-spacing:-0.5px;transform:scaleX(0.9);">1</div>
<div class="xl" style="left:144.99999999999997px;top:35.3px;height:32px;line-height:32.6px;font-size:20.2px;white-space:nowrap;">长度</div>
<div class="xl" style="left:241px;top:35.3px;width:101px;height:32px;line-height:32.6px;font-size:22px;text-align:center;letter-spacing:-0.5px;transform:scaleX(0.9);">9.96</div>
<div class="xl" style="left:342px;top:35.3px;width:96.8px;height:32px;line-height:32.6px;font-size:22px;text-align:right;letter-spacing:-0.5px;transform:scaleX(0.9);transform-origin:100% 50%;">10.99</div>
<div class="xl" style="left:442.4000000000001px;top:35.3px;width:97.4px;height:32px;line-height:32.6px;font-size:22px;text-align:right;letter-spacing:-0.5px;transform:scaleX(0.9);transform-origin:100% 50%;">9.96</div>
<div style="left:40px;top:64px;width:585px;height:1px;background:#d6dae0;"></div>
<div style="left:0px;top:64px;width:40px;height:1px;background:#a0a8b3;"></div>
<div class="xl" style="left:0px;top:70.4px;width:39px;height:30px;line-height:32px;font-size:22px;text-align:center;color:#3a3a3a;letter-spacing:-0.5px;transform:scaleX(0.9);">3</div>
<div class="xl" style="left:39.39999999999998px;top:67.5px;width:101px;height:32px;line-height:32.6px;font-size:22px;text-align:center;letter-spacing:-0.5px;transform:scaleX(0.9);">2</div>
<div class="xl" style="left:144.99999999999997px;top:67.5px;height:32px;line-height:32.6px;font-size:20.2px;white-space:nowrap;">长度</div>
<div class="xl" style="left:241px;top:67.5px;width:101px;height:32px;line-height:32.6px;font-size:22px;text-align:center;letter-spacing:-0.5px;transform:scaleX(0.9);">10.03</div>
<div class="xl" style="left:342px;top:67.5px;width:96.8px;height:32px;line-height:32.6px;font-size:22px;text-align:right;letter-spacing:-0.5px;transform:scaleX(0.9);transform-origin:100% 50%;">10.99</div>
<div class="xl" style="left:442.4000000000001px;top:67.5px;width:97.4px;height:32px;line-height:32.6px;font-size:22px;text-align:right;letter-spacing:-0.5px;transform:scaleX(0.9);transform-origin:100% 50%;">9.96</div>
<div style="left:40px;top:96px;width:585px;height:1px;background:#d6dae0;"></div>
<div style="left:0px;top:96px;width:40px;height:1px;background:#a0a8b3;"></div>
<div class="xl" style="left:0px;top:102.6px;width:39px;height:30px;line-height:32px;font-size:22px;text-align:center;color:#3a3a3a;letter-spacing:-0.5px;transform:scaleX(0.9);">4</div>
<div class="xl" style="left:39.39999999999998px;top:99.7px;width:101px;height:32px;line-height:32.6px;font-size:22px;text-align:center;letter-spacing:-0.5px;transform:scaleX(0.9);">3</div>
<div class="xl" style="left:144.99999999999997px;top:99.7px;height:32px;line-height:32.6px;font-size:20.2px;white-space:nowrap;">长度</div>
<div class="xl" style="left:241px;top:99.7px;width:101px;height:32px;line-height:32.6px;font-size:22px;text-align:center;letter-spacing:-0.5px;transform:scaleX(0.9);">10.03</div>
<div class="xl" style="left:342px;top:99.7px;width:96.8px;height:32px;line-height:32.6px;font-size:22px;text-align:right;letter-spacing:-0.5px;transform:scaleX(0.9);transform-origin:100% 50%;">10.99</div>
<div class="xl" style="left:442.4000000000001px;top:99.7px;width:97.4px;height:32px;line-height:32.6px;font-size:22px;text-align:right;letter-spacing:-0.5px;transform:scaleX(0.9);transform-origin:100% 50%;">9.96</div>
<div style="left:40px;top:128px;width:585px;height:1px;background:#d6dae0;"></div>
<div style="left:0px;top:128px;width:40px;height:1px;background:#a0a8b3;"></div>
<div class="xl" style="left:0px;top:134.8px;width:39px;height:30px;line-height:32px;font-size:22px;text-align:center;color:#3a3a3a;letter-spacing:-0.5px;transform:scaleX(0.9);">5</div>
<div class="xl" style="left:39.39999999999998px;top:131.9px;width:101px;height:32px;line-height:32.6px;font-size:22px;text-align:center;letter-spacing:-0.5px;transform:scaleX(0.9);">4</div>
<div class="xl" style="left:144.99999999999997px;top:131.9px;height:32px;line-height:32.6px;font-size:20.2px;white-space:nowrap;">长度</div>
<div class="xl" style="left:241px;top:131.9px;width:101px;height:32px;line-height:32.6px;font-size:22px;text-align:center;letter-spacing:-0.5px;transform:scaleX(0.9);">9.77</div>
<div class="xl" style="left:342px;top:131.9px;width:96.8px;height:32px;line-height:32.6px;font-size:22px;text-align:right;letter-spacing:-0.5px;transform:scaleX(0.9);transform-origin:100% 50%;">10.99</div>
<div class="xl" style="left:442.4000000000001px;top:131.9px;width:97.4px;height:32px;line-height:32.6px;font-size:22px;text-align:right;letter-spacing:-0.5px;transform:scaleX(0.9);transform-origin:100% 50%;">9.96</div>
<div style="left:40px;top:161px;width:585px;height:1px;background:#d6dae0;"></div>
<div style="left:0px;top:161px;width:40px;height:1px;background:#a0a8b3;"></div>
<div class="xl" style="left:0px;top:167.0px;width:39px;height:30px;line-height:32px;font-size:22px;text-align:center;color:#3a3a3a;letter-spacing:-0.5px;transform:scaleX(0.9);">6</div>
<div class="xl" style="left:39.39999999999998px;top:164.1px;width:101px;height:32px;line-height:32.6px;font-size:22px;text-align:center;letter-spacing:-0.5px;transform:scaleX(0.9);">5</div>
<div class="xl" style="left:144.99999999999997px;top:164.1px;height:32px;line-height:32.6px;font-size:20.2px;white-space:nowrap;">长度</div>
<div class="xl" style="left:241px;top:164.1px;width:101px;height:32px;line-height:32.6px;font-size:22px;text-align:center;letter-spacing:-0.5px;transform:scaleX(0.9);">9.75</div>
<div class="xl" style="left:342px;top:164.1px;width:96.8px;height:32px;line-height:32.6px;font-size:22px;text-align:right;letter-spacing:-0.5px;transform:scaleX(0.9);transform-origin:100% 50%;">10.99</div>
<div class="xl" style="left:442.4000000000001px;top:164.1px;width:97.4px;height:32px;line-height:32.6px;font-size:22px;text-align:right;letter-spacing:-0.5px;transform:scaleX(0.9);transform-origin:100% 50%;">9.96</div>
<div style="left:40px;top:193px;width:585px;height:1px;background:#d6dae0;"></div>
<div style="left:0px;top:193px;width:40px;height:1px;background:#a0a8b3;"></div>
<div class="xl" style="left:0px;top:199.2px;width:39px;height:30px;line-height:32px;font-size:22px;text-align:center;color:#3a3a3a;letter-spacing:-0.5px;transform:scaleX(0.9);">7</div>
<div class="xl" style="left:39.39999999999998px;top:196.3px;width:101px;height:32px;line-height:32.6px;font-size:22px;text-align:center;letter-spacing:-0.5px;transform:scaleX(0.9);">6</div>
<div class="xl" style="left:144.99999999999997px;top:196.3px;height:32px;line-height:32.6px;font-size:20.2px;white-space:nowrap;">长度</div>
<div class="xl" style="left:241px;top:196.3px;width:101px;height:32px;line-height:32.6px;font-size:22px;text-align:center;letter-spacing:-0.5px;transform:scaleX(0.9);">9.79</div>
<div class="xl" style="left:342px;top:196.3px;width:96.8px;height:32px;line-height:32.6px;font-size:22px;text-align:right;letter-spacing:-0.5px;transform:scaleX(0.9);transform-origin:100% 50%;">10.99</div>
<div class="xl" style="left:442.4000000000001px;top:196.3px;width:97.4px;height:32px;line-height:32.6px;font-size:22px;text-align:right;letter-spacing:-0.5px;transform:scaleX(0.9);transform-origin:100% 50%;">9.96</div>
<div style="left:40px;top:225px;width:585px;height:1px;background:#d6dae0;"></div>
<div style="left:0px;top:225px;width:40px;height:1px;background:#a0a8b3;"></div>
<div class="xl" style="left:0px;top:231.4px;width:39px;height:30px;line-height:32px;font-size:22px;text-align:center;color:#3a3a3a;letter-spacing:-0.5px;transform:scaleX(0.9);">8</div>
<div class="xl" style="left:39.39999999999998px;top:228.5px;width:101px;height:32px;line-height:32.6px;font-size:22px;text-align:center;letter-spacing:-0.5px;transform:scaleX(0.9);">7</div>
<div class="xl" style="left:144.99999999999997px;top:228.5px;height:32px;line-height:32.6px;font-size:20.2px;white-space:nowrap;">长度</div>
<div class="xl" style="left:241px;top:228.5px;width:101px;height:32px;line-height:32.6px;font-size:22px;text-align:center;letter-spacing:-0.5px;transform:scaleX(0.9);">9.84</div>
<div class="xl" style="left:342px;top:228.5px;width:96.8px;height:32px;line-height:32.6px;font-size:22px;text-align:right;letter-spacing:-0.5px;transform:scaleX(0.9);transform-origin:100% 50%;">10.99</div>
<div class="xl" style="left:442.4000000000001px;top:228.5px;width:97.4px;height:32px;line-height:32.6px;font-size:22px;text-align:right;letter-spacing:-0.5px;transform:scaleX(0.9);transform-origin:100% 50%;">9.96</div>
<div style="left:40px;top:257px;width:585px;height:1px;background:#d6dae0;"></div>
<div style="left:0px;top:257px;width:40px;height:1px;background:#a0a8b3;"></div>
<div class="xl" style="left:0px;top:263.6px;width:39px;height:30px;line-height:32px;font-size:22px;text-align:center;color:#3a3a3a;letter-spacing:-0.5px;transform:scaleX(0.9);">9</div>
<div class="xl" style="left:39.39999999999998px;top:260.7px;width:101px;height:32px;line-height:32.6px;font-size:22px;text-align:center;letter-spacing:-0.5px;transform:scaleX(0.9);">8</div>
<div class="xl" style="left:144.99999999999997px;top:260.7px;height:32px;line-height:32.6px;font-size:20.2px;white-space:nowrap;">长度</div>
<div class="xl" style="left:241px;top:260.7px;width:101px;height:32px;line-height:32.6px;font-size:22px;text-align:center;letter-spacing:-0.5px;transform:scaleX(0.9);">9.9</div>
<div class="xl" style="left:342px;top:260.7px;width:96.8px;height:32px;line-height:32.6px;font-size:22px;text-align:right;letter-spacing:-0.5px;transform:scaleX(0.9);transform-origin:100% 50%;">10.99</div>
<div class="xl" style="left:442.4000000000001px;top:260.7px;width:97.4px;height:32px;line-height:32.6px;font-size:22px;text-align:right;letter-spacing:-0.5px;transform:scaleX(0.9);transform-origin:100% 50%;">9.96</div>
<div style="left:40px;top:289px;width:585px;height:1px;background:#d6dae0;"></div>
<div style="left:0px;top:289px;width:40px;height:1px;background:#a0a8b3;"></div>
<div class="xl" style="left:0px;top:295.8px;width:39px;height:30px;line-height:32px;font-size:22px;text-align:center;color:#3a3a3a;letter-spacing:-0.5px;transform:scaleX(0.9);">10</div>
<div class="xl" style="left:39.39999999999998px;top:292.9px;width:101px;height:32px;line-height:32.6px;font-size:22px;text-align:center;letter-spacing:-0.5px;transform:scaleX(0.9);">9</div>
<div class="xl" style="left:144.99999999999997px;top:292.9px;height:32px;line-height:32.6px;font-size:20.2px;white-space:nowrap;">长度</div>
<div class="xl" style="left:241px;top:292.9px;width:101px;height:32px;line-height:32.6px;font-size:22px;text-align:center;letter-spacing:-0.5px;transform:scaleX(0.9);">9.87</div>
<div class="xl" style="left:342px;top:292.9px;width:96.8px;height:32px;line-height:32.6px;font-size:22px;text-align:right;letter-spacing:-0.5px;transform:scaleX(0.9);transform-origin:100% 50%;">10.99</div>
<div class="xl" style="left:442.4000000000001px;top:292.9px;width:97.4px;height:32px;line-height:32.6px;font-size:22px;text-align:right;letter-spacing:-0.5px;transform:scaleX(0.9);transform-origin:100% 50%;">9.96</div>
<div style="left:40px;top:322px;width:585px;height:1px;background:#d6dae0;"></div>
<div style="left:0px;top:322px;width:40px;height:1px;background:#a0a8b3;"></div>
<div class="xl" style="left:0px;top:328.0px;width:39px;height:30px;line-height:32px;font-size:22px;text-align:center;color:#3a3a3a;letter-spacing:-0.5px;transform:scaleX(0.9);">11</div>
<div class="xl" style="left:39.39999999999998px;top:325.1px;width:101px;height:32px;line-height:32.6px;font-size:22px;text-align:center;letter-spacing:-0.5px;transform:scaleX(0.9);">10</div>
<div class="xl" style="left:144.99999999999997px;top:325.1px;height:32px;line-height:32.6px;font-size:20.2px;white-space:nowrap;">长度</div>
<div class="xl" style="left:241px;top:325.1px;width:101px;height:32px;line-height:32.6px;font-size:22px;text-align:center;letter-spacing:-0.5px;transform:scaleX(0.9);">9.8</div>
<div class="xl" style="left:342px;top:325.1px;width:96.8px;height:32px;line-height:32.6px;font-size:22px;text-align:right;letter-spacing:-0.5px;transform:scaleX(0.9);transform-origin:100% 50%;">10.99</div>
<div class="xl" style="left:442.4000000000001px;top:325.1px;width:97.4px;height:32px;line-height:32.6px;font-size:22px;text-align:right;letter-spacing:-0.5px;transform:scaleX(0.9);transform-origin:100% 50%;">9.96</div>
<div style="left:40px;top:354px;width:585px;height:1px;background:#d6dae0;"></div>
<div style="left:0px;top:354px;width:40px;height:1px;background:#a0a8b3;"></div>
<div class="xl" style="left:0px;top:360.2px;width:39px;height:30px;line-height:32px;font-size:22px;text-align:center;color:#3a3a3a;letter-spacing:-0.5px;transform:scaleX(0.9);">12</div>
<div class="xl" style="left:39.39999999999998px;top:357.3px;width:101px;height:32px;line-height:32.6px;font-size:22px;text-align:center;letter-spacing:-0.5px;transform:scaleX(0.9);">11</div>
<div class="xl" style="left:144.99999999999997px;top:357.3px;height:32px;line-height:32.6px;font-size:20.2px;white-space:nowrap;">长度</div>
<div class="xl" style="left:241px;top:357.3px;width:101px;height:32px;line-height:32.6px;font-size:22px;text-align:center;letter-spacing:-0.5px;transform:scaleX(0.9);">9.95</div>
<div class="xl" style="left:342px;top:357.3px;width:96.8px;height:32px;line-height:32.6px;font-size:22px;text-align:right;letter-spacing:-0.5px;transform:scaleX(0.9);transform-origin:100% 50%;">10.99</div>
<div class="xl" style="left:442.4000000000001px;top:357.3px;width:97.4px;height:32px;line-height:32.6px;font-size:22px;text-align:right;letter-spacing:-0.5px;transform:scaleX(0.9);transform-origin:100% 50%;">9.96</div>
<div style="left:40px;top:386px;width:585px;height:1px;background:#d6dae0;"></div>
<div style="left:0px;top:386px;width:40px;height:1px;background:#a0a8b3;"></div>
<div class="xl" style="left:0px;top:392.4px;width:39px;height:30px;line-height:32px;font-size:22px;text-align:center;color:#3a3a3a;letter-spacing:-0.5px;transform:scaleX(0.9);">13</div>
<div class="xl" style="left:39.39999999999998px;top:389.5px;width:101px;height:32px;line-height:32.6px;font-size:22px;text-align:center;letter-spacing:-0.5px;transform:scaleX(0.9);">12</div>
<div class="xl" style="left:144.99999999999997px;top:389.5px;height:32px;line-height:32.6px;font-size:20.2px;white-space:nowrap;">长度</div>
<div class="xl" style="left:241px;top:389.5px;width:101px;height:32px;line-height:32.6px;font-size:22px;text-align:center;letter-spacing:-0.5px;transform:scaleX(0.9);">9.63</div>
<div class="xl" style="left:342px;top:389.5px;width:96.8px;height:32px;line-height:32.6px;font-size:22px;text-align:right;letter-spacing:-0.5px;transform:scaleX(0.9);transform-origin:100% 50%;">10.99</div>
<div class="xl" style="left:442.4000000000001px;top:389.5px;width:97.4px;height:32px;line-height:32.6px;font-size:22px;text-align:right;letter-spacing:-0.5px;transform:scaleX(0.9);transform-origin:100% 50%;">9.96</div>
<div style="left:40px;top:418px;width:585px;height:1px;background:#d6dae0;"></div>
<div style="left:0px;top:418px;width:40px;height:1px;background:#a0a8b3;"></div>
<div class="xl" style="left:0px;top:424.6px;width:39px;height:30px;line-height:32px;font-size:22px;text-align:center;color:#3a3a3a;letter-spacing:-0.5px;transform:scaleX(0.9);">14</div>
<div class="xl" style="left:39.39999999999998px;top:421.7px;width:101px;height:32px;line-height:32.6px;font-size:22px;text-align:center;letter-spacing:-0.5px;transform:scaleX(0.9);">13</div>
<div class="xl" style="left:144.99999999999997px;top:421.7px;height:32px;line-height:32.6px;font-size:20.2px;white-space:nowrap;">长度</div>
<div class="xl" style="left:241px;top:421.7px;width:101px;height:32px;line-height:32.6px;font-size:22px;text-align:center;letter-spacing:-0.5px;transform:scaleX(0.9);">9.8</div>
<div class="xl" style="left:342px;top:421.7px;width:96.8px;height:32px;line-height:32.6px;font-size:22px;text-align:right;letter-spacing:-0.5px;transform:scaleX(0.9);transform-origin:100% 50%;">10.99</div>
<div class="xl" style="left:442.4000000000001px;top:421.7px;width:97.4px;height:32px;line-height:32.6px;font-size:22px;text-align:right;letter-spacing:-0.5px;transform:scaleX(0.9);transform-origin:100% 50%;">9.96</div>
<div style="left:40px;top:450px;width:585px;height:1px;background:#d6dae0;"></div>
<div style="left:0px;top:450px;width:40px;height:1px;background:#a0a8b3;"></div>
<div class="xl" style="left:0px;top:456.8px;width:39px;height:30px;line-height:32px;font-size:22px;text-align:center;color:#3a3a3a;letter-spacing:-0.5px;transform:scaleX(0.9);">15</div>
<div class="xl" style="left:39.39999999999998px;top:453.9px;width:101px;height:32px;line-height:32.6px;font-size:22px;text-align:center;letter-spacing:-0.5px;transform:scaleX(0.9);">14</div>
<div class="xl" style="left:144.99999999999997px;top:453.9px;height:32px;line-height:32.6px;font-size:20.2px;white-space:nowrap;">长度</div>
<div class="xl" style="left:241px;top:453.9px;width:101px;height:32px;line-height:32.6px;font-size:22px;text-align:center;letter-spacing:-0.5px;transform:scaleX(0.9);">9.83</div>
<div class="xl" style="left:342px;top:453.9px;width:96.8px;height:32px;line-height:32.6px;font-size:22px;text-align:right;letter-spacing:-0.5px;transform:scaleX(0.9);transform-origin:100% 50%;">10.99</div>
<div class="xl" style="left:442.4000000000001px;top:453.9px;width:97.4px;height:32px;line-height:32.6px;font-size:22px;text-align:right;letter-spacing:-0.5px;transform:scaleX(0.9);transform-origin:100% 50%;">9.96</div>
<div style="left:40px;top:483px;width:585px;height:1px;background:#d6dae0;"></div>
<div style="left:0px;top:483px;width:40px;height:1px;background:#a0a8b3;"></div>
<div class="xl" style="left:0px;top:489.0px;width:39px;height:30px;line-height:32px;font-size:22px;text-align:center;color:#3a3a3a;letter-spacing:-0.5px;transform:scaleX(0.9);">16</div>
<div class="xl" style="left:39.39999999999998px;top:486.1px;width:101px;height:32px;line-height:32.6px;font-size:22px;text-align:center;letter-spacing:-0.5px;transform:scaleX(0.9);">15</div>
<div class="xl" style="left:144.99999999999997px;top:486.1px;height:32px;line-height:32.6px;font-size:20.2px;white-space:nowrap;">长度</div>
<div class="xl" style="left:241px;top:486.1px;width:101px;height:32px;line-height:32.6px;font-size:22px;text-align:center;letter-spacing:-0.5px;transform:scaleX(0.9);">9.78</div>
<div class="xl" style="left:342px;top:486.1px;width:96.8px;height:32px;line-height:32.6px;font-size:22px;text-align:right;letter-spacing:-0.5px;transform:scaleX(0.9);transform-origin:100% 50%;">10.99</div>
<div class="xl" style="left:442.4000000000001px;top:486.1px;width:97.4px;height:32px;line-height:32.6px;font-size:22px;text-align:right;letter-spacing:-0.5px;transform:scaleX(0.9);transform-origin:100% 50%;">9.96</div>
<div style="left:40px;top:515px;width:585px;height:1px;background:#d6dae0;"></div>
<div style="left:0px;top:515px;width:40px;height:33px;background:#fdd660;border:1.5px solid #e3a21a;"></div>
<div class="xl" style="left:0px;top:521.2px;width:39px;height:30px;line-height:32px;font-size:22px;text-align:center;color:#3a3a3a;letter-spacing:-0.5px;transform:scaleX(0.9);">17</div>
<div class="xl" style="left:39.39999999999998px;top:518.3px;width:101px;height:32px;line-height:32.6px;font-size:22px;text-align:center;letter-spacing:-0.5px;transform:scaleX(0.9);">16</div>
<div class="xl" style="left:144.99999999999997px;top:518.3px;height:32px;line-height:32.6px;font-size:20.2px;white-space:nowrap;">长度</div>
<div class="xl" style="left:241px;top:518.3px;width:101px;height:32px;line-height:32.6px;font-size:22px;text-align:center;letter-spacing:-0.5px;transform:scaleX(0.9);">11</div>
<div class="xl" style="left:342px;top:518.3px;width:96.8px;height:32px;line-height:32.6px;font-size:22px;text-align:right;letter-spacing:-0.5px;transform:scaleX(0.9);transform-origin:100% 50%;">10.99</div>
<div class="xl" style="left:442.4000000000001px;top:518.3px;width:97.4px;height:32px;line-height:32.6px;font-size:22px;text-align:right;letter-spacing:-0.5px;transform:scaleX(0.9);transform-origin:100% 50%;">9.96</div>
<div style="left:40px;top:547px;width:585px;height:1px;background:#d6dae0;"></div>
<div class="xl" style="left:0px;top:553.4px;width:39px;height:30px;line-height:32px;font-size:22px;text-align:center;color:#3a3a3a;letter-spacing:-0.5px;transform:scaleX(0.9);">18</div>
<div class="xl" style="left:39.39999999999998px;top:550.5px;width:101px;height:32px;line-height:32.6px;font-size:22px;text-align:center;letter-spacing:-0.5px;transform:scaleX(0.9);">17</div>
<div class="xl" style="left:144.99999999999997px;top:550.5px;height:32px;line-height:32.6px;font-size:20.2px;white-space:nowrap;">长度</div>
<div class="xl" style="left:241px;top:550.5px;width:101px;height:32px;line-height:32.6px;font-size:22px;text-align:center;letter-spacing:-0.5px;transform:scaleX(0.9);">10.15</div>
<div class="xl" style="left:342px;top:550.5px;width:96.8px;height:32px;line-height:32.6px;font-size:22px;text-align:right;letter-spacing:-0.5px;transform:scaleX(0.9);transform-origin:100% 50%;">10.99</div>
<div class="xl" style="left:442.4000000000001px;top:550.5px;width:97.4px;height:32px;line-height:32.6px;font-size:22px;text-align:right;letter-spacing:-0.5px;transform:scaleX(0.9);transform-origin:100% 50%;">9.96</div>
<div style="left:40px;top:579px;width:585px;height:1px;background:#d6dae0;"></div>
<div style="left:0px;top:579px;width:40px;height:1px;background:#a0a8b3;"></div>
<div class="xl" style="left:0px;top:585.6px;width:39px;height:30px;line-height:32px;font-size:22px;text-align:center;color:#3a3a3a;letter-spacing:-0.5px;transform:scaleX(0.9);">19</div>
<div class="xl" style="left:39.39999999999998px;top:582.7px;width:101px;height:32px;line-height:32.6px;font-size:22px;text-align:center;letter-spacing:-0.5px;transform:scaleX(0.9);">18</div>
<div class="xl" style="left:144.99999999999997px;top:582.7px;height:32px;line-height:32.6px;font-size:20.2px;white-space:nowrap;">长度</div>
<div class="xl" style="left:241px;top:582.7px;width:101px;height:32px;line-height:32.6px;font-size:22px;text-align:center;letter-spacing:-0.5px;transform:scaleX(0.9);">10.06</div>
<div class="xl" style="left:342px;top:582.7px;width:96.8px;height:32px;line-height:32.6px;font-size:22px;text-align:right;letter-spacing:-0.5px;transform:scaleX(0.9);transform-origin:100% 50%;">10.99</div>
<div class="xl" style="left:442.4000000000001px;top:582.7px;width:97.4px;height:32px;line-height:32.6px;font-size:22px;text-align:right;letter-spacing:-0.5px;transform:scaleX(0.9);transform-origin:100% 50%;">9.96</div>
<div style="left:40px;top:611px;width:585px;height:1px;background:#d6dae0;"></div>
<div style="left:0px;top:611px;width:40px;height:1px;background:#a0a8b3;"></div>
<div class="xl" style="left:0px;top:617.8px;width:39px;height:30px;line-height:32px;font-size:22px;text-align:center;color:#3a3a3a;letter-spacing:-0.5px;transform:scaleX(0.9);">20</div>
<div class="xl" style="left:39.39999999999998px;top:614.9px;width:101px;height:32px;line-height:32.6px;font-size:22px;text-align:center;letter-spacing:-0.5px;transform:scaleX(0.9);">19</div>
<div class="xl" style="left:144.99999999999997px;top:614.9px;height:32px;line-height:32.6px;font-size:20.2px;white-space:nowrap;">长度</div>
<div class="xl" style="left:241px;top:614.9px;width:101px;height:32px;line-height:32.6px;font-size:22px;text-align:center;letter-spacing:-0.5px;transform:scaleX(0.9);">10.92</div>
<div class="xl" style="left:342px;top:614.9px;width:96.8px;height:32px;line-height:32.6px;font-size:22px;text-align:right;letter-spacing:-0.5px;transform:scaleX(0.9);transform-origin:100% 50%;">10.99</div>
<div class="xl" style="left:442.4000000000001px;top:614.9px;width:97.4px;height:32px;line-height:32.6px;font-size:22px;text-align:right;letter-spacing:-0.5px;transform:scaleX(0.9);transform-origin:100% 50%;">9.96</div>
<div style="left:40px;top:644px;width:585px;height:1px;background:#d6dae0;"></div>
<div style="left:0px;top:644px;width:40px;height:1px;background:#a0a8b3;"></div>
<div class="xl" style="left:0px;top:650.0px;width:39px;height:30px;line-height:32px;font-size:22px;text-align:center;color:#3a3a3a;letter-spacing:-0.5px;transform:scaleX(0.9);">21</div>
<div class="xl" style="left:39.39999999999998px;top:647.1px;width:101px;height:32px;line-height:32.6px;font-size:22px;text-align:center;letter-spacing:-0.5px;transform:scaleX(0.9);">20</div>
<div class="xl" style="left:144.99999999999997px;top:647.1px;height:32px;line-height:32.6px;font-size:20.2px;white-space:nowrap;">长度</div>
<div class="xl" style="left:241px;top:647.1px;width:101px;height:32px;line-height:32.6px;font-size:22px;text-align:center;letter-spacing:-0.5px;transform:scaleX(0.9);">10.81</div>
<div class="xl" style="left:342px;top:647.1px;width:96.8px;height:32px;line-height:32.6px;font-size:22px;text-align:right;letter-spacing:-0.5px;transform:scaleX(0.9);transform-origin:100% 50%;">10.99</div>
<div class="xl" style="left:442.4000000000001px;top:647.1px;width:97.4px;height:32px;line-height:32.6px;font-size:22px;text-align:right;letter-spacing:-0.5px;transform:scaleX(0.9);transform-origin:100% 50%;">9.96</div>
<div style="left:40px;top:676px;width:585px;height:1px;background:#d6dae0;"></div>
<div style="left:0px;top:676px;width:40px;height:1px;background:#a0a8b3;"></div>
<div style="left:140px;top:32px;width:1px;height:634px;background:#d6dae0;"></div>
<div style="left:241px;top:32px;width:1px;height:634px;background:#d6dae0;"></div>
<div style="left:342px;top:32px;width:1px;height:634px;background:#d6dae0;"></div>
<div style="left:442px;top:32px;width:1px;height:634px;background:#d6dae0;"></div>
<div style="left:543px;top:32px;width:1px;height:634px;background:#d6dae0;"></div>
<div style="left:39px;top:0px;width:1px;height:666px;background:#a4abb5;"></div>
</div>
<div style="left:1451px;top:518px;width:21px;height:692px;background:linear-gradient(90deg,#d8dce3,#e6e9ee 50%,#dde1e7);"></div>
<div style="left:1452px;top:519px;width:20px;height:10px;background:#fff;border:1.5px solid #9aa1ab;border-radius:1px;"></div>
<div style="left:1456px;top:522px;width:12px;height:2px;background:#9aa1ab;"></div>
<svg style="left:1455px;top:536px" width="13" height="8" viewBox="0 0 13 8"><path d="M0 7.6 L6.5 0.4 L13 7.6Z" fill="#555"/></svg>
<div style="left:1452px;top:553px;width:19px;height:143px;background:linear-gradient(90deg,#f4f5f8,#e8ebf0 50%,#d9dde4);border:1.5px solid #969da8;border-radius:2px;"></div>
<div style="left:1456px;top:618px;width:11px;height:1px;background:#7d848e;"></div>
<div style="left:1456px;top:621px;width:11px;height:1px;background:#7d848e;"></div>
<div style="left:1456px;top:624px;width:11px;height:1px;background:#7d848e;"></div>
<div style="left:1456px;top:627px;width:11px;height:1px;background:#7d848e;"></div>
<svg style="left:1454px;top:1194px" width="14" height="8" viewBox="0 0 14 8"><path d="M0 0.4 L14 0.4 L7 7.8Z" fill="#555"/></svg>
<div style="left:826px;top:1210px;width:646px;height:22px;background:#dde1e9;border-top:1px solid #b7bdc6;"></div>
<svg style="left:833px;top:1215px" width="72" height="12" viewBox="0 0 72 12">
<g fill="#3c3c3c"><rect x="0.6" y="0.6" width="2" height="10.8"/><path d="M9.4 0.6 L9.4 11.4 L3.4 6Z"/>
<path d="M29 0.6 L29 11.4 L22.6 6Z"/>
<path d="M43.4 0.6 L43.4 11.4 L49.8 6Z"/>
<path d="M62.4 0.6 L62.4 11.4 L68.4 6Z"/><rect x="69" y="0.6" width="2" height="10.8"/></g></svg>
<svg style="left:910px;top:1209px" width="150" height="24" viewBox="0 0 150 24">
<path d="M3.5 0 L3.5 18 Q3.5 22.6 8 22.6 L84 22.6 L100.5 1 L100.5 0Z" fill="#fff"/>
<path d="M3.5 1 L3.5 18 Q3.5 22.6 8 22.6 L84 22.6 L100.5 1" fill="none" stroke="#a9b0ba" stroke-width="1.2"/>
<path d="M84 22.6 L125 22.6 L142.5 1.5 L100 1.5" fill="#e4e7ed" stroke="#a9b0ba" stroke-width="1.2"/>
<rect x="111" y="17.6" width="5.6" height="2.6" rx="1" fill="#7f93b8"/><rect x="104" y="6.6" width="16" height="11.4" rx="2.5" fill="#dfe6f3" stroke="#7f93b8" stroke-width="1.6"/>
<path d="M103 1.8 L104.3 5 L107.6 4.2 L105.6 6.8 L107.8 9.2 L104.4 8.8 L103 12 L101.8 8.8 L98.4 9.2 L100.6 6.8 L98.6 4.2 L101.8 5Z" fill="#f2a31c"/><circle cx="103.1" cy="7" r="1.5" fill="#fff6d8"/>
</svg>
<div class="ser" style="left:927.8px;top:1207.60px;height:28px;line-height:28px;font-size:18.8px;color:#3c3c3c;white-space:nowrap;letter-spacing:0.9px;">Sheet1</div>
<div style="left:1201px;top:1211px;width:11px;height:21px;background:#fff;border:1.5px solid #959ca7;border-radius:2px;"></div>
<div style="left:1205.5px;top:1215px;width:2.0px;height:13px;background:#8b929c;"></div>
<svg style="left:1219.5px;top:1215px" width="9" height="13" viewBox="0 0 9 13"><path d="M8.6 0 L8.6 13 L0.4 6.5Z" fill="#444"/></svg>
<div style="left:1237px;top:1211px;width:88px;height:21px;background:linear-gradient(180deg,#f2f4f7,#e3e6ec 60%,#d8dce3);border:1.5px solid #969da8;border-radius:3px;"></div>
<div style="left:1275px;top:1217px;width:1px;height:10px;background:#7d848e;"></div>
<div style="left:1278px;top:1217px;width:1px;height:10px;background:#7d848e;"></div>
<div style="left:1281px;top:1217px;width:1px;height:10px;background:#7d848e;"></div>
<div style="left:1284px;top:1217px;width:1px;height:10px;background:#7d848e;"></div>
<svg style="left:1424px;top:1215px" width="9" height="13" viewBox="0 0 9 13"><path d="M0.4 0 L0.4 13 L8.6 6.5Z" fill="#444"/></svg>
<div style="left:1440px;top:1211px;width:10px;height:21px;background:#fff;border:1.5px solid #959ca7;border-radius:2px;"></div>
<div style="left:1444px;top:1215px;width:2px;height:13px;background:#8b929c;"></div>
<div style="left:826px;top:1232px;width:648px;height:2px;background:#9aa2ad;"></div>
<div style="left:826px;top:1234px;width:648px;height:29px;background:linear-gradient(180deg,#e6e9ed 0%,#d9dde2 40%,#c6cbd2 75%,#bfc4cb 100%);"></div>
<div style="left:836.6px;top:1235.10px;height:25px;line-height:25px;font-size:16.8px;color:#4a4a4a;white-space:nowrap;">就绪</div>
<div style="left:883px;top:1236px;width:2px;height:25px;background:linear-gradient(90deg,#a7adb6 50%,#eef0f3 50%);"></div>
<div style="left:932px;top:1236px;width:2px;height:25px;background:linear-gradient(90deg,#a7adb6 50%,#eef0f3 50%);"></div>
<div style="left:1106px;top:1236px;width:2px;height:25px;background:linear-gradient(90deg,#a7adb6 50%,#eef0f3 50%);"></div>
<svg style="left:897px;top:1237.5px" width="22" height="19" viewBox="0 0 22 19">
<rect x="1.6" y="1" width="19.6" height="17" fill="#fff" stroke="#4f6fb5" stroke-width="1.2"/>
<rect x="1.6" y="1" width="19.6" height="4.4" fill="#4a6fc2"/>
<path d="M1.6 9.4 H21.2 M1.6 13.4 H21.2 M8 5.4 V18 M14.6 5.4 V18" stroke="#9db3df" stroke-width="1.1"/>
<circle cx="3.8" cy="3.6" r="3.5" fill="#e2472c"/></svg>
<div style="left:1113px;top:1236px;width:26px;height:25px;background:linear-gradient(180deg,#ffe9a0,#fbd052);border:1.5px solid #e3a72d;border-radius:3.5px;"></div>
<svg style="left:1117px;top:1240px" width="76" height="18" viewBox="0 0 76 18">
<rect x="0.8" y="0.8" width="16.4" height="15.6" fill="#fff" stroke="#6a6a6a" stroke-width="1.3"/>
<path d="M0.8 6 H17.2 M0.8 11.2 H17.2 M6.2 0.8 V16.4 M11.8 0.8 V16.4" stroke="#6a6a6a" stroke-width="1.2"/>
<rect x="28.6" y="0.8" width="16.4" height="15.6" fill="#c9cdd3" stroke="#6a6a6a" stroke-width="1.3"/>
<rect x="32" y="3.8" width="9.6" height="9.8" fill="#fff" stroke="#6a6a6a" stroke-width="1"/>
<path d="M33.6 6.4 H40 M33.6 8.8 H40 M33.6 11.2 H40" stroke="#8a8a8a" stroke-width="0.9"/>
<rect x="52.4" y="0.8" width="17.6" height="15.6" fill="#b9bec6" stroke="#6a6a6a" stroke-width="1.3"/>
<rect x="54" y="1.6" width="3.2" height="8.4" fill="#fff"/><rect x="59" y="1.6" width="3.4" height="8.4" fill="#fff"/>
</svg>
<div style="left:1206.4px;top:1233.90px;height:27px;line-height:27px;font-size:18.2px;color:#3c3c3c;white-space:nowrap;letter-spacing:-0.6px;">100%</div>
<svg style="left:1260px;top:1235px" width="214" height="28" viewBox="0 0 214 28">
<defs><linearGradient id="zb" x1="0" y1="0" x2="0" y2="1"><stop offset="0" stop-color="#ffffff"/><stop offset="1" stop-color="#d4d8de"/></linearGradient></defs>
<path d="M22 12.6 H165" stroke="#8d949e" stroke-width="1.3"/><path d="M22 13.8 H165" stroke="#f3f4f6" stroke-width="1"/>
<circle cx="12.2" cy="12.6" r="10.2" fill="url(#zb)" stroke="#8d949e" stroke-width="1.4"/>
<rect x="7" y="11.4" width="10.6" height="2.6" fill="#4a4a4a"/>
<circle cx="174.7" cy="12.6" r="10.2" fill="url(#zb)" stroke="#8d949e" stroke-width="1.4"/>
<rect x="169.4" y="11.4" width="10.6" height="2.6" fill="#4a4a4a"/><rect x="173.4" y="7.4" width="2.6" height="10.6" fill="#4a4a4a"/>
<path d="M88.6 3.4 H100.6 V13.6 L94.6 20.4 L88.6 13.6Z" fill="url(#zb)" stroke="#8d949e" stroke-width="1.3"/>
<g fill="#a4aab3"><rect x="209" y="15" width="2.4" height="2.4"/><rect x="205" y="19" width="2.4" height="2.4"/><rect x="209" y="19" width="2.4" height="2.4"/><rect x="201" y="23" width="2.4" height="2.4"/><rect x="205" y="23" width="2.4" height="2.4"/><rect x="209" y="23" width="2.4" height="2.4"/></g>
</svg>
<div style="left:1474px;top:403px;width:30px;height:860px;background:linear-gradient(90deg,#bcbcbc 0%,#d2d2d2 10%,#e2e2e2 28%,#ececec 60%,#f0f0f0 100%);"></div>
<div style="left:1474px;top:430px;width:40px;height:40px;overflow:hidden;"><div style="left:-20.5px;top:0;height:40px;line-height:36px;font-size:25.5px;font-weight:bold;color:#000;white-space:nowrap;">制图</div></div>
<div style="left:1858.3px;top:526.70px;height:25px;line-height:25px;font-size:16.67px;color:#000;white-space:nowrap;">不分阶段</div>
<svg style="left:1474px;top:402px;overflow:hidden" width="676" height="861" viewBox="1474 402 676 861"><path d="M1474 668.4 H2150" stroke="#d9d9d9" stroke-width="1.3"/><path d="M1474 742.3 H2150" stroke="#d9d9d9" stroke-width="1.3"/><path d="M1474 888.4 H2150" stroke="#d9d9d9" stroke-width="1.3"/><path d="M1474 962.4 H2150" stroke="#d9d9d9" stroke-width="1.3"/><path d="M1474 581.3 H2150" stroke="#000" stroke-width="1.6"/><path d="M1474 594.7 H2150" stroke="#ff0000" stroke-width="2.7"/><path d="M1474 814.5 H2150" stroke="#008000" stroke-width="2.6"/><path d="M1474 1034.9 H2150" stroke="#ff0000" stroke-width="2.7"/><path d="M1474 1049.4 H2150" stroke="#000" stroke-width="1.6"/><path d="M1474 1189.4 H2150" stroke="#000" stroke-width="1.5"/><path d="M1474 1250.5 H2150" stroke="#ff0000" stroke-width="2.7"/><path d="M1480.2 1049.4 v9.2 M1488.2 1049.4 v5.2 M1496.2 1049.4 v9.2 M1504.2 1049.4 v5.2 M1512.2 1049.4 v9.2 M1520.2 1049.4 v5.2 M1528.2 1049.4 v9.2 M1536.3 1049.4 v5.2 M1544.3 1049.4 v9.2 M1552.3 1049.4 v5.2 M1560.3 1049.4 v9.2 M1568.3 1049.4 v5.2 M1576.3 1049.4 v9.2 M1584.3 1049.4 v5.2 M1592.3 1049.4 v9.2 M1600.3 1049.4 v5.2 M1608.3 1049.4 v9.2 M1616.3 1049.4 v5.2 M1624.3 1049.4 v9.2 M1632.4 1049.4 v5.2 M1640.4 1049.4 v9.2 M1648.4 1049.4 v5.2 M1656.4 1049.4 v9.2 M1664.4 1049.4 v5.2 M1672.4 1049.4 v9.2 M1680.4 1049.4 v5.2 M1688.4 1049.4 v9.2 M1696.4 1049.4 v5.2 M1704.4 1049.4 v9.2 M1712.4 1049.4 v5.2 M1720.4 1049.4 v9.2 M1728.4 1049.4 v5.2 M1736.5 1049.4 v9.2 M1744.5 1049.4 v5.2 M1752.5 1049.4 v9.2 M1760.5 1049.4 v5.2 M1768.5 1049.4 v9.2 M1776.5 1049.4 v5.2 M1784.5 1049.4 v9.2 M1792.5 1049.4 v5.2 M1800.5 1049.4 v9.2 M1808.5 1049.4 v5.2 M1816.5 1049.4 v9.2 M1824.5 1049.4 v5.2 M1832.6 1049.4 v9.2 M1840.6 1049.4 v5.2 M1848.6 1049.4 v9.2 M1856.6 1049.4 v5.2 M1864.6 1049.4 v9.2 M1872.6 1049.4 v5.2 M1880.6 1049.4 v9.2 M1888.6 1049.4 v5.2 M1896.6 1049.4 v9.2 M1904.6 1049.4 v5.2 M1912.6 1049.4 v9.2 M1920.6 1049.4 v5.2 M1928.6 1049.4 v9.2 M1936.7 1049.4 v5.2 M1944.7 1049.4 v9.2 M1952.7 1049.4 v5.2 M1960.7 1049.4 v9.2 M1968.7 1049.4 v5.2 M1976.7 1049.4 v9.2 M1984.7 1049.4 v5.2 M1992.7 1049.4 v9.2 M2000.7 1049.4 v5.2 M2008.7 1049.4 v9.2 M2016.7 1049.4 v5.2 M2024.7 1049.4 v9.2 M2032.8 1049.4 v5.2 M2040.8 1049.4 v9.2 M2048.8 1049.4 v5.2 M2056.8 1049.4 v9.2 M2064.8 1049.4 v5.2 M2072.8 1049.4 v9.2 M2080.8 1049.4 v5.2 M2088.8 1049.4 v9.2 M2096.8 1049.4 v5.2 M2104.8 1049.4 v9.2 M2112.8 1049.4 v5.2 M2120.8 1049.4 v9.2 M2128.8 1049.4 v5.2 M2136.9 1049.4 v9.2 M2144.9 1049.4 v5.2" stroke="#000" stroke-width="1.4" fill="none"/><path d="M1472.2 934.8 L1480.2 811.6 L1488.6 667.2 L1495.5 912.1 L1503.9 784.6 L1512.3 765.2 L1519.5 751.2 L1527.9 846.3 L1536.1 765.2 L1544.5 751.2 L1551.4 846.3 L1559.8 784.6 L1568.2 921.8 L1576.6 801.7 L1583.8 793.3 L1592.2 840.7 L1600.4 812.7 L1607.5 793.3 L1615.7 840.7 L1624.1 812.7 L1632.5 780.5 L1639.6 958.3 L1648.1 917.8 L1656.5 909.3 L1664.9 746.8 L1671.8 868.8 L1680.2 909.3 L1688.6 746.8 L1695.5 868.8 L1703.9 669.8 L1712.3 826.7 L1720.8 872.9 L1727.7 782 L1736.1 769.3 L1744.5 725.9 L1752.9 782 L1760 769.3 L1768.4 725.9 L1776.8 898.1 L1784 900.9 L1792.4 793.3 L1800.8 742.8 L1809.2 761.1 L1816.1 861.9 L1824.5 742.8 L1833 761.1 L1841.4 861.9 L1848.3 870 L1856.7 797.3 L1865.1 735.6 L1872.2 917.8 L1880.7 769.3 L1889.1 803 L1897.2 917.8 L1904.4 769.3 L1912.8 803 L1921.2 821.1 L1929.4 851.9 L1936.5 744 L1944.9 818.5 L1953.4 856 L1960.3 850.4 L1968.7 818.5 L1977.1 856 L1985.5 850.4 L1992.4 650.2 L2000.8 875.7 L2009.2 769.3 L2017.7 808.6 L2024.7 982.3 L2033.2 754 L2041.6 808.6 L2048.4 982.3 L2056.8 754 L2065.1 997.6 L2073.8 695.1 L2080.7 983.6 L2089.1 866 L2097.5 774.9 L2105.7 889.7 L2112.8 866 L2121.2 774.9 L2129.4 889.7 L2136.5 777.7 L2144.9 829.5 L2153.4 742.5" fill="none" stroke="#0000ff" stroke-width="1.3" stroke-linejoin="round"/><g fill="#0000ff"><path d="M1469.0 931.3h7v7h-7v-2.4h-1.7v-2.1h1.7z"/><path d="M1477.0 808.1h7v7h-7v-2.4h-1.7v-2.1h1.7z"/><path d="M1485.4 663.7h7v7h-7v-2.4h-1.7v-2.1h1.7z"/><path d="M1492.3 908.6h7v7h-7v-2.4h-1.7v-2.1h1.7z"/><path d="M1500.7 781.1h7v7h-7v-2.4h-1.7v-2.1h1.7z"/><path d="M1509.1 761.7h7v7h-7v-2.4h-1.7v-2.1h1.7z"/><path d="M1516.3 747.7h7v7h-7v-2.4h-1.7v-2.1h1.7z"/><path d="M1524.7 842.8h7v7h-7v-2.4h-1.7v-2.1h1.7z"/><path d="M1532.9 761.7h7v7h-7v-2.4h-1.7v-2.1h1.7z"/><path d="M1541.3 747.7h7v7h-7v-2.4h-1.7v-2.1h1.7z"/><path d="M1548.2 842.8h7v7h-7v-2.4h-1.7v-2.1h1.7z"/><path d="M1556.6 781.1h7v7h-7v-2.4h-1.7v-2.1h1.7z"/><path d="M1565.0 918.3h7v7h-7v-2.4h-1.7v-2.1h1.7z"/><path d="M1573.4 798.2h7v7h-7v-2.4h-1.7v-2.1h1.7z"/><path d="M1580.6 789.8h7v7h-7v-2.4h-1.7v-2.1h1.7z"/><path d="M1589.0 837.2h7v7h-7v-2.4h-1.7v-2.1h1.7z"/><path d="M1597.2 809.2h7v7h-7v-2.4h-1.7v-2.1h1.7z"/><path d="M1604.3 789.8h7v7h-7v-2.4h-1.7v-2.1h1.7z"/><path d="M1612.5 837.2h7v7h-7v-2.4h-1.7v-2.1h1.7z"/><path d="M1620.9 809.2h7v7h-7v-2.4h-1.7v-2.1h1.7z"/><path d="M1629.3 777.0h7v7h-7v-2.4h-1.7v-2.1h1.7z"/><path d="M1636.4 954.8h7v7h-7v-2.4h-1.7v-2.1h1.7z"/><path d="M1644.9 914.3h7v7h-7v-2.4h-1.7v-2.1h1.7z"/><path d="M1653.3 905.8h7v7h-7v-2.4h-1.7v-2.1h1.7z"/><path d="M1661.7 743.3h7v7h-7v-2.4h-1.7v-2.1h1.7z"/><path d="M1668.6 865.3h7v7h-7v-2.4h-1.7v-2.1h1.7z"/><path d="M1677.0 905.8h7v7h-7v-2.4h-1.7v-2.1h1.7z"/><path d="M1685.4 743.3h7v7h-7v-2.4h-1.7v-2.1h1.7z"/><path d="M1692.3 865.3h7v7h-7v-2.4h-1.7v-2.1h1.7z"/><path d="M1700.7 666.3h7v7h-7v-2.4h-1.7v-2.1h1.7z"/><path d="M1709.1 823.2h7v7h-7v-2.4h-1.7v-2.1h1.7z"/><path d="M1717.6 869.4h7v7h-7v-2.4h-1.7v-2.1h1.7z"/><path d="M1724.5 778.5h7v7h-7v-2.4h-1.7v-2.1h1.7z"/><path d="M1732.9 765.8h7v7h-7v-2.4h-1.7v-2.1h1.7z"/><path d="M1741.3 722.4h7v7h-7v-2.4h-1.7v-2.1h1.7z"/><path d="M1749.7 778.5h7v7h-7v-2.4h-1.7v-2.1h1.7z"/><path d="M1756.8 765.8h7v7h-7v-2.4h-1.7v-2.1h1.7z"/><path d="M1765.2 722.4h7v7h-7v-2.4h-1.7v-2.1h1.7z"/><path d="M1773.6 894.6h7v7h-7v-2.4h-1.7v-2.1h1.7z"/><path d="M1780.8 897.4h7v7h-7v-2.4h-1.7v-2.1h1.7z"/><path d="M1789.2 789.8h7v7h-7v-2.4h-1.7v-2.1h1.7z"/><path d="M1797.6 739.3h7v7h-7v-2.4h-1.7v-2.1h1.7z"/><path d="M1806.0 757.6h7v7h-7v-2.4h-1.7v-2.1h1.7z"/><path d="M1812.9 858.4h7v7h-7v-2.4h-1.7v-2.1h1.7z"/><path d="M1821.3 739.3h7v7h-7v-2.4h-1.7v-2.1h1.7z"/><path d="M1829.8 757.6h7v7h-7v-2.4h-1.7v-2.1h1.7z"/><path d="M1838.2 858.4h7v7h-7v-2.4h-1.7v-2.1h1.7z"/><path d="M1845.1 866.5h7v7h-7v-2.4h-1.7v-2.1h1.7z"/><path d="M1853.5 793.8h7v7h-7v-2.4h-1.7v-2.1h1.7z"/><path d="M1861.9 732.1h7v7h-7v-2.4h-1.7v-2.1h1.7z"/><path d="M1869.0 914.3h7v7h-7v-2.4h-1.7v-2.1h1.7z"/><path d="M1877.5 765.8h7v7h-7v-2.4h-1.7v-2.1h1.7z"/><path d="M1885.9 799.5h7v7h-7v-2.4h-1.7v-2.1h1.7z"/><path d="M1894.0 914.3h7v7h-7v-2.4h-1.7v-2.1h1.7z"/><path d="M1901.2 765.8h7v7h-7v-2.4h-1.7v-2.1h1.7z"/><path d="M1909.6 799.5h7v7h-7v-2.4h-1.7v-2.1h1.7z"/><path d="M1918.0 817.6h7v7h-7v-2.4h-1.7v-2.1h1.7z"/><path d="M1926.2 848.4h7v7h-7v-2.4h-1.7v-2.1h1.7z"/><path d="M1933.3 740.5h7v7h-7v-2.4h-1.7v-2.1h1.7z"/><path d="M1941.7 815.0h7v7h-7v-2.4h-1.7v-2.1h1.7z"/><path d="M1950.2 852.5h7v7h-7v-2.4h-1.7v-2.1h1.7z"/><path d="M1957.1 846.9h7v7h-7v-2.4h-1.7v-2.1h1.7z"/><path d="M1965.5 815.0h7v7h-7v-2.4h-1.7v-2.1h1.7z"/><path d="M1973.9 852.5h7v7h-7v-2.4h-1.7v-2.1h1.7z"/><path d="M1982.3 846.9h7v7h-7v-2.4h-1.7v-2.1h1.7z"/><path d="M1989.2 646.7h7v7h-7v-2.4h-1.7v-2.1h1.7z"/><path d="M1997.6 872.2h7v7h-7v-2.4h-1.7v-2.1h1.7z"/><path d="M2006.0 765.8h7v7h-7v-2.4h-1.7v-2.1h1.7z"/><path d="M2014.5 805.1h7v7h-7v-2.4h-1.7v-2.1h1.7z"/><path d="M2021.5 978.8h7v7h-7v-2.4h-1.7v-2.1h1.7z"/><path d="M2030.0 750.5h7v7h-7v-2.4h-1.7v-2.1h1.7z"/><path d="M2038.4 805.1h7v7h-7v-2.4h-1.7v-2.1h1.7z"/><path d="M2045.2 978.8h7v7h-7v-2.4h-1.7v-2.1h1.7z"/><path d="M2053.6 750.5h7v7h-7v-2.4h-1.7v-2.1h1.7z"/><path d="M2061.9 994.1h7v7h-7v-2.4h-1.7v-2.1h1.7z"/><path d="M2070.6 691.6h7v7h-7v-2.4h-1.7v-2.1h1.7z"/><path d="M2077.5 980.1h7v7h-7v-2.4h-1.7v-2.1h1.7z"/><path d="M2085.9 862.5h7v7h-7v-2.4h-1.7v-2.1h1.7z"/><path d="M2094.3 771.4h7v7h-7v-2.4h-1.7v-2.1h1.7z"/><path d="M2102.5 886.2h7v7h-7v-2.4h-1.7v-2.1h1.7z"/><path d="M2109.6 862.5h7v7h-7v-2.4h-1.7v-2.1h1.7z"/><path d="M2118.0 771.4h7v7h-7v-2.4h-1.7v-2.1h1.7z"/><path d="M2126.2 886.2h7v7h-7v-2.4h-1.7v-2.1h1.7z"/><path d="M2133.3 774.2h7v7h-7v-2.4h-1.7v-2.1h1.7z"/><path d="M2141.7 826.0h7v7h-7v-2.4h-1.7v-2.1h1.7z"/><path d="M2150.2 739.0h7v7h-7v-2.4h-1.7v-2.1h1.7z"/></g><path d="M2065.1 1292.5 L2073.8 1203.8 L2080.9 1223 L2089.1 1455" fill="none" stroke="#0000ff" stroke-width="1.35"/><g fill="#0000ff"><path d="M2070.6 1200.3h7v7h-7v-2.4h-1.7v-2.1h1.7z"/><path d="M2077.7 1219.5h7v7h-7v-2.4h-1.7v-2.1h1.7z"/></g><g font-family="Liberation Sans, sans-serif" font-size="13.3" fill="#2a2a2a" stroke="#2a2a2a" stroke-width="0.45"><text x="1477.0" y="1076.7" text-anchor="middle">9</text><text x="1484.7" y="1076.7" text-anchor="middle">6</text><text x="1492.5" y="1076.7" text-anchor="middle">6</text><text x="1500.2" y="1076.7" text-anchor="middle">2</text><text x="1508.0" y="1076.7" text-anchor="middle">3</text><text x="1515.7" y="1076.7" text-anchor="middle">4</text><text x="1523.4" y="1076.7" text-anchor="middle">5</text><text x="1531.2" y="1076.7" text-anchor="middle">6</text><text x="1538.9" y="1076.7" text-anchor="middle">7</text><text x="1546.7" y="1076.7" text-anchor="middle">8</text><text x="1554.4" y="1076.7" text-anchor="middle">9</text><text x="1562.1" y="1076.7" text-anchor="middle">0</text><text x="1569.9" y="1076.7" text-anchor="middle">1</text><text x="1577.6" y="1076.7" text-anchor="middle">2</text><text x="1585.4" y="1076.7" text-anchor="middle">3</text><text x="1593.1" y="1076.7" text-anchor="middle">4</text><text x="1600.8" y="1076.7" text-anchor="middle">5</text><text x="1608.6" y="1076.7" text-anchor="middle">6</text><text x="1616.3" y="1076.7" text-anchor="middle">7</text><text x="1624.1" y="1076.7" text-anchor="middle">8</text><text x="1631.8" y="1076.7" text-anchor="middle">9</text><text x="1639.5" y="1076.7" text-anchor="middle">8</text><text x="1647.3" y="1076.7" text-anchor="middle">8</text><text x="1655.0" y="1076.7" text-anchor="middle">2</text><text x="1662.8" y="1076.7" text-anchor="middle">8</text><text x="1670.5" y="1076.7" text-anchor="middle">4</text><text x="1678.2" y="1076.7" text-anchor="middle">5</text><text x="1686.0" y="1076.7" text-anchor="middle">6</text><text x="1693.7" y="1076.7" text-anchor="middle">7</text><text x="1701.5" y="1076.7" text-anchor="middle">8</text><text x="1709.2" y="1076.7" text-anchor="middle">9</text><text x="1716.9" y="1076.7" text-anchor="middle">9</text><text x="1724.7" y="1076.7" text-anchor="middle">9</text><text x="1732.4" y="1076.7" text-anchor="middle">2</text><text x="1740.2" y="1076.7" text-anchor="middle">3</text><text x="1747.9" y="1076.7" text-anchor="middle">4</text><text x="1755.6" y="1076.7" text-anchor="middle">5</text><text x="1763.4" y="1076.7" text-anchor="middle">6</text><text x="1771.1" y="1076.7" text-anchor="middle">9</text><text x="1778.9" y="1076.7" text-anchor="middle">9</text><text x="1786.6" y="1076.7" text-anchor="middle">9</text><text x="1794.3" y="1076.7" text-anchor="middle">0</text><text x="1802.1" y="1076.7" text-anchor="middle">0</text><text x="1809.8" y="1076.7" text-anchor="middle">0</text><text x="1817.6" y="1076.7" text-anchor="middle">2</text><text x="1825.3" y="1076.7" text-anchor="middle">3</text><text x="1833.0" y="1076.7" text-anchor="middle">4</text><text x="1840.8" y="1076.7" text-anchor="middle">5</text><text x="1848.5" y="1076.7" text-anchor="middle">6</text><text x="1856.3" y="1076.7" text-anchor="middle">7</text><text x="1864.0" y="1076.7" text-anchor="middle">8</text><text x="1871.7" y="1076.7" text-anchor="middle">9</text><text x="1879.5" y="1076.7" text-anchor="middle">0</text><text x="1887.2" y="1076.7" text-anchor="middle">1</text><text x="1895.0" y="1076.7" text-anchor="middle">2</text><text x="1902.7" y="1076.7" text-anchor="middle">3</text><text x="1910.4" y="1076.7" text-anchor="middle">4</text><text x="1918.2" y="1076.7" text-anchor="middle">5</text><text x="1925.9" y="1076.7" text-anchor="middle">6</text><text x="1933.7" y="1076.7" text-anchor="middle">7</text><text x="1941.4" y="1076.7" text-anchor="middle">8</text><text x="1949.1" y="1076.7" text-anchor="middle">9</text><text x="1956.9" y="1076.7" text-anchor="middle">2</text><text x="1964.6" y="1076.7" text-anchor="middle">2</text><text x="1972.4" y="1076.7" text-anchor="middle">2</text><text x="1980.1" y="1076.7" text-anchor="middle">3</text><text x="1987.8" y="1076.7" text-anchor="middle">4</text><text x="1995.6" y="1076.7" text-anchor="middle">5</text><text x="2003.3" y="1076.7" text-anchor="middle">6</text><text x="2011.1" y="1076.7" text-anchor="middle">2</text><text x="2018.8" y="1076.7" text-anchor="middle">8</text><text x="2026.5" y="1076.7" text-anchor="middle">9</text><text x="2034.3" y="1076.7" text-anchor="middle">3</text><text x="2042.0" y="1076.7" text-anchor="middle">3</text><text x="2049.8" y="1076.7" text-anchor="middle">3</text><text x="2057.5" y="1076.7" text-anchor="middle">2</text><text x="2065.2" y="1076.7" text-anchor="middle">3</text><text x="2073.0" y="1076.7" text-anchor="middle">4</text><text x="2080.7" y="1076.7" text-anchor="middle">5</text><text x="2088.5" y="1076.7" text-anchor="middle">6</text><text x="2096.2" y="1076.7" text-anchor="middle">7</text><text x="2103.9" y="1076.7" text-anchor="middle">8</text><text x="2111.7" y="1076.7" text-anchor="middle">8</text><text x="2119.4" y="1076.7" text-anchor="middle">9</text><text x="2127.2" y="1076.7" text-anchor="middle">4</text><text x="2134.9" y="1076.7" text-anchor="middle">4</text><text x="2142.6" y="1076.7" text-anchor="middle">2</text><text x="2150.4" y="1076.7" text-anchor="middle">3</text></g></svg>
</body></html>
